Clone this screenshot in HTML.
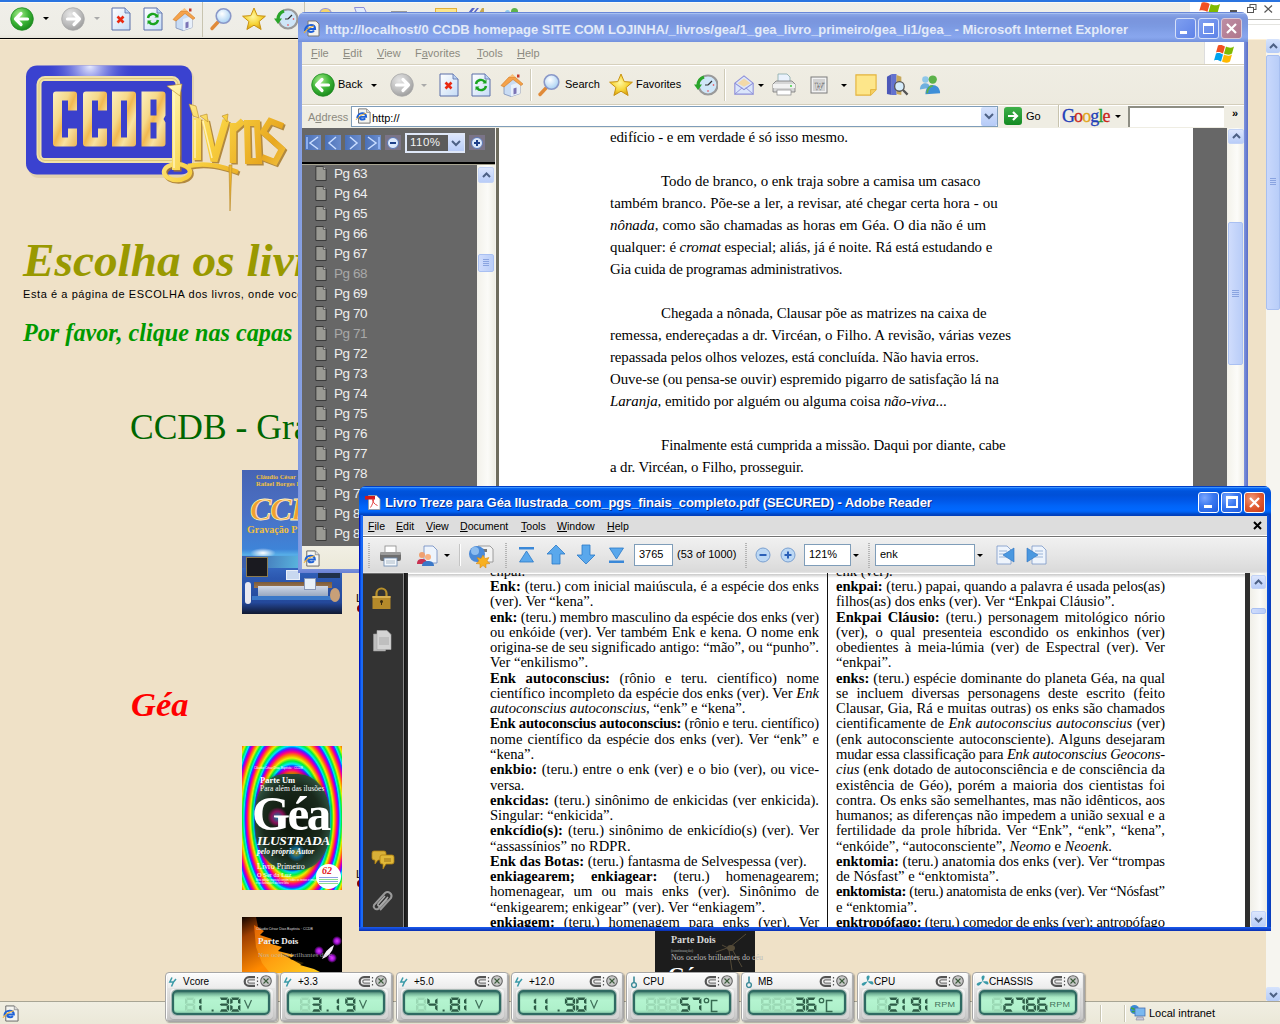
<!DOCTYPE html>
<html><head><meta charset="utf-8">
<style>
*{margin:0;padding:0;box-sizing:border-box}
html,body{width:1280px;height:1024px;overflow:hidden;background:#efe1c7;font-family:"Liberation Sans",sans-serif}
.a{position:absolute}
.ser{font-family:"Liberation Serif",serif}
.ui{font-family:"Liberation Sans",sans-serif;font-size:11px;color:#000}
svg{position:absolute;overflow:visible}
/*W*/.wg{position:absolute;top:972px;width:113px;height:50px;border-radius:4px;background:linear-gradient(#f6f6f6,#e2e2e2 35%,#d6d6d6 70%,#c4c4c4);border:1px solid #a6a6a6;box-shadow:inset 1px 1px #fff,inset -1px -1px #b0b0b0,1px 1px 1px rgba(0,0,0,.25)}
.wgh{position:absolute;left:2px;top:1px;width:107px;height:14px;background:linear-gradient(#fbfbfb,#ececec)}
.wgb{position:absolute;left:4px;top:16px;width:103px;height:30px;border-radius:4px;background:linear-gradient(#f8f8f8,#e0e0e0 40%,#d2d2d2);box-shadow:0 1px 1px #aaa}
.wgt{position:absolute;top:2.5px;font-size:10px;color:#000;white-space:nowrap}
.lcd{position:absolute;left:5.5px;top:17px;width:98px;height:25px;border-radius:5px;border:2.5px solid #2e6a62;background:linear-gradient(#4e8a78,#78b89c 10%,#a8e8c4 24%,#b4f4d0 40%,#aef0ca 85%,#8cd0ae);box-shadow:inset 0 0 1px #1f4e48,0 0 0 1px #a8b8b4}
/*/W*/





.pm{position:absolute;top:34px;font-size:10.6px;color:#000;white-space:nowrap}
.grip{position:absolute;top:57px;width:2px;height:25px;background:repeating-linear-gradient(#b4b4b4 0 1px,transparent 1px 2px)}
.pl{position:absolute;width:329px;font-size:14.6px;line-height:16px;white-space:nowrap;color:#000}
.pj{}

</style></head><body>

<svg width="0" height="0" style="position:absolute;left:0;top:0">
<defs>
 <radialGradient id="gGreen" cx="38%" cy="30%" r="75%"><stop offset="0" stop-color="#a8ec8c"/><stop offset="0.55" stop-color="#3cb436"/><stop offset="1" stop-color="#17861a"/></radialGradient>
 <radialGradient id="gGray" cx="38%" cy="30%" r="75%"><stop offset="0" stop-color="#e6e6e6"/><stop offset="0.6" stop-color="#bdbdbd"/><stop offset="1" stop-color="#9a9a9a"/></radialGradient>
 <linearGradient id="gDoc" x1="0" y1="0" x2="1" y2="1"><stop offset="0" stop-color="#ffffff"/><stop offset="1" stop-color="#c6dcf6"/></linearGradient>
 <radialGradient id="gStar" cx="45%" cy="40%" r="60%"><stop offset="0" stop-color="#fff7a0"/><stop offset="0.6" stop-color="#f7d538"/><stop offset="1" stop-color="#d9a212"/></radialGradient>
 <radialGradient id="gLens" cx="40%" cy="35%" r="65%"><stop offset="0" stop-color="#ffffff"/><stop offset="1" stop-color="#a9d2f4"/></radialGradient>
 <symbol id="iBack" viewBox="0 0 24 24"><circle cx="12" cy="12" r="11.3" fill="url(#gGreen)" stroke="#1f8a22" stroke-width="0.8"/><path d="M5.5 12h12M11 6.5L5.5 12l5.5 5.5" stroke="#fff" stroke-width="3.2" fill="none" stroke-linecap="round" stroke-linejoin="round"/></symbol>
 <symbol id="iFwd" viewBox="0 0 24 24"><circle cx="12" cy="12" r="11.3" fill="url(#gGray)" stroke="#a8a8a8" stroke-width="0.8"/><path d="M6.5 12h12M13 6.5l5.5 5.5L13 17.5" stroke="#fff" stroke-width="3.2" fill="none" stroke-linecap="round" stroke-linejoin="round"/></symbol>
 <symbol id="iStop" viewBox="0 0 20 24"><path d="M1 1h13l5 5v17H1z" fill="url(#gDoc)" stroke="#5a6ea8" stroke-width="1"/><path d="M14 1v5h5" fill="#bcd2f2" stroke="#5a6ea8" stroke-width="0.8"/><path d="M6.5 9.5l6 6M12.5 9.5l-6 6" stroke="#ea2a12" stroke-width="2.6"/></symbol>
 <symbol id="iRef" viewBox="0 0 20 24"><path d="M1 1h13l5 5v17H1z" fill="url(#gDoc)" stroke="#5a6ea8" stroke-width="1"/><path d="M14 1v5h5" fill="#bcd2f2" stroke="#5a6ea8" stroke-width="0.8"/><path d="M5 11a5 5 0 0 1 9-2M15 13a5 5 0 0 1-9 2" stroke="#1aa51f" stroke-width="2.4" fill="none"/><path d="M15.5 6.5v4h-4zM4.5 17.5v-4h4z" fill="#1aa51f"/></symbol>
 <symbol id="iHome" viewBox="0 0 24 24"><path d="M4 11v10l7 2.5 9-3V10L12 4z" fill="#c9dcf4" stroke="#7e8fb8" stroke-width="0.8"/><path d="M11 23.5V12l9-3v11.5z" fill="#e8f0fb"/><path d="M13.5 21.5v-6l3-1v6z" fill="#7b74b6"/><path d="M1 12.5L9 4h6l8 7-2 1.5-8-6-9 7.5z" fill="#f5a24a" stroke="#d07a25" stroke-width="0.6"/><path d="M9 4l3.5-3 3 3z" fill="#f8c07a"/><rect x="17" y="1.5" width="2.5" height="3" fill="#c43a2a"/></symbol>
 <symbol id="iSearch" viewBox="0 0 24 24"><path d="M3 21.5l6.5-7" stroke="#e08a38" stroke-width="3.4" stroke-linecap="round"/><circle cx="14.5" cy="9" r="7.3" fill="url(#gLens)" stroke="#8a98c8" stroke-width="1.6"/></symbol>
 <symbol id="iStar" viewBox="0 0 24 24"><path d="M12 1l3.2 7.6 8.2.6-6.3 5.3 2 8L12 18.2 4.9 22.5l2-8L.6 9.2l8.2-.6z" fill="url(#gStar)" stroke="#c89212" stroke-width="1"/></symbol>
 <symbol id="iHist" viewBox="0 0 24 24"><circle cx="14" cy="12" r="9.5" fill="#cfe6f8" stroke="#9a9a9a" stroke-width="2.2"/><path d="M14 12l4-4M14 12h-3" stroke="#333" stroke-width="1.2"/><circle cx="19.5" cy="12" r="0.8" fill="#e33"/><circle cx="14" cy="18" r="0.8" fill="#e33"/><path d="M10 4a9 9 0 0 0-6 8" stroke="#2aa52a" stroke-width="3.2" fill="none"/><path d="M0 11.5h8l-4 5.5z" fill="#2aa52a"/></symbol>
 <symbol id="iMail" viewBox="0 0 24 24"><path d="M2 10l10-8 10 8v12H2z" fill="#dbe6fb" stroke="#8e8fd8" stroke-width="1.2"/><path d="M5 10l7-5 7 5-7 4z" fill="#f3d9a8"/><path d="M2 10l10 7 10-7" fill="none" stroke="#8e8fd8" stroke-width="1.2"/><path d="M2 22l8-7M22 22l-8-7" stroke="#8e8fd8" stroke-width="1"/></symbol>
 <symbol id="iPrint" viewBox="0 0 24 24"><path d="M6 9V1h9l3 3v5z" fill="#eaf2fc" stroke="#8aa" stroke-width="0.8"/><path d="M1 11l3-3h16l3 3v8H1z" fill="#d6d6d6" stroke="#777" stroke-width="0.8"/><path d="M1 11h22v4H1z" fill="#f2f2f2"/><rect x="5" y="17" width="14" height="5" fill="#fff" stroke="#888" stroke-width="0.7"/><circle cx="19" cy="13" r="0.9" fill="#3c3"/></symbol>
 <symbol id="iWord" viewBox="0 0 18 18"><rect x="1" y="1" width="16" height="16" fill="#f2f2f2" stroke="#7c7c7c" stroke-width="1"/><rect x="3" y="3" width="12" height="12" fill="#d2d2d2"/><text x="9" y="13.5" font-family="Liberation Serif" font-style="italic" font-weight="bold" font-size="11" text-anchor="middle" fill="#fff" stroke="#666" stroke-width="0.4">W</text></symbol>
 <symbol id="iNote" viewBox="0 0 24 24"><path d="M1 1h22v16l-6 6H1z" fill="#fde68a" stroke="#e3b23a" stroke-width="1.2"/><path d="M17 23v-6h6" fill="#f6d064" stroke="#e3b23a" stroke-width="1"/></symbol>
 <symbol id="iBooks" viewBox="0 0 24 24"><path d="M1 4l5-3v22l-5-1z" fill="#4c58b8"/><path d="M6 1h5v22H6z" fill="#6272d0"/><path d="M11 2l5 2v19l-5-1z" fill="#c7a85a"/><circle cx="14" cy="14" r="5" fill="#d6ecfb" stroke="#555" stroke-width="1.4"/><path d="M17.5 17.5l5 5" stroke="#555" stroke-width="2.4"/></symbol>
 <symbol id="iMsn" viewBox="0 0 24 24"><circle cx="7" cy="6" r="3.5" fill="#8fc7ea"/><path d="M1 17c0-5 3-7 6-7s5 2 5 5z" fill="#6fb0df"/><circle cx="15" cy="6" r="4.5" fill="#5cb24a"/><path d="M7 22c0-7 4-10 8-10s8 3 8 9z" fill="#3e8fd8"/><path d="M9 21c0-5 3-8 6-8" fill="none" stroke="#5cb24a" stroke-width="2"/></symbol>
 <symbol id="iIE" viewBox="0 0 18 18"><path d="M4 1h9l4 4v12H4z" fill="#f5f5f0" stroke="#666" stroke-width="1"/><path d="M13 1v4h4" fill="#ddd" stroke="#666" stroke-width="0.6"/><path d="M2.5 11.5c0-3.5 2.5-5.5 5.5-5.5s4.5 2 4.5 4H5.5c0 2 1.5 3 3 3s2.5-.7 3-1.3" fill="none" stroke="#1f62d6" stroke-width="2.2"/><path d="M1 13.5c2.5-3.5 7-6.5 11.5-7.5" fill="none" stroke="#f0b33c" stroke-width="1.1"/></symbol>
 <symbol id="iPage" viewBox="0 0 12 16"><path d="M.5 .5h8l3 3v12H.5z" fill="#9a9a94" stroke="#333" stroke-width="1"/><path d="M8.5 .5v3h3" fill="#ddd" stroke="#333" stroke-width="0.8"/></symbol>
</defs>
</svg>

<!-- ============ BACKGROUND BROWSER ============ -->
<div class="a" style="left:0;top:0;width:1280px;height:2px;background:#2a74e0"></div>
<div class="a" style="left:0;top:2px;width:1280px;height:36px;background:linear-gradient(#fbfaf4 0 1px,#f0efe9 1px,#eeede6 90%,#e6e4da)"></div>
<div class="a" style="left:0;top:38px;width:1248px;height:1px;background:#000"></div>
<div class="a" style="left:0;top:39px;width:1266px;height:1px;background:#fdf0d8"></div>
<!-- top right white menu area -->
<div class="a" style="left:1190px;top:2px;width:90px;height:37px;background:#fff"></div>
<div class="a" style="left:1240px;top:19px;width:40px;height:1px;background:#b4b4b0"></div>
<div class="a" style="left:1240px;top:24px;width:40px;height:1px;background:#e4e4e0"></div>


<!-- background toolbar icons -->
<svg style="left:10px;top:7px" width="24" height="24"><use href="#iBack"/></svg>
<svg style="left:43px;top:17px" width="6" height="4"><path d="M0 0H6L3 3z" fill="#000"/></svg>
<svg style="left:61px;top:7px" width="24" height="24"><use href="#iFwd"/></svg>
<svg style="left:94px;top:17px" width="6" height="4"><path d="M0 0H6L3 3z" fill="#aaa"/></svg>
<svg style="left:111px;top:7px" width="20" height="24"><use href="#iStop"/></svg>
<svg style="left:143px;top:7px" width="20" height="24"><use href="#iRef"/></svg>
<svg style="left:172px;top:7px" width="24" height="24"><use href="#iHome"/></svg>
<div class="a" style="left:202px;top:2px;width:1px;height:35px;background:#c8c4b0"></div>
<svg style="left:209px;top:7px" width="24" height="24"><use href="#iSearch"/></svg>
<svg style="left:242px;top:7px" width="24" height="24"><use href="#iStar"/></svg>
<svg style="left:274px;top:7px" width="24" height="24"><use href="#iHist"/></svg>
<div class="a" style="left:304px;top:2px;width:1px;height:12px;background:#c8c4b0"></div>
<div class="a" style="left:319px;top:8px;width:13px;height:6px;background:#f6d56a;border-radius:6px 6px 0 0;border:1px solid #9a98d8;border-bottom:0"></div>
<svg style="left:354px;top:7px" width="13" height="6"><path d="M0.5 0.5H10L12.5 6H2.5Z" fill="#e4eefb" stroke="#8e8fd8"/></svg>
<div class="a" style="left:391px;top:11px;width:16px;height:2px;background:#9a9a9a"></div>
<div class="a" style="left:435px;top:8px;width:22px;height:6px;background:#fde68a;border:1px solid #e3b23a;border-bottom:0"></div>
<svg style="left:467px;top:8px" width="18" height="5"><path d="M1 5L5 0H8L4 5ZM6 5L10 0H12L8 5Z" fill="#5a68c8"/><path d="M12 5L15 0H17L17 5Z" fill="#c8a850"/></svg>
<div class="a" style="left:505px;top:10px;width:5px;height:4px;background:#8fc7ea;border-radius:3px 3px 0 0"></div>
<div class="a" style="left:511px;top:8px;width:7px;height:5px;background:#5cb24a;border-radius:4px 4px 0 0"></div>

<svg style="left:1197px;top:0px" width="30" height="24" viewBox="0 0 26 20">
    <path d="M4 2c3-1 5 0 7 1l-2 7c-2-1-4-2-7-1z" fill="#f25022"/>
    <path d="M12 3c2 1 5 2 8 0l-2 7c-3 2-6 1-8 0z" fill="#7fba00"/>
</svg>
<div class="a" style="left:1230px;top:10px;width:7px;height:2px;background:#555"></div>
<svg style="left:1247px;top:4px" width="10" height="10"><rect x="3" y="0.5" width="6" height="5" fill="none" stroke="#555"/><rect x="0.5" y="3.5" width="6" height="5" fill="#fff" stroke="#555"/></svg>
<svg style="left:1264px;top:5px" width="9" height="8"><path d="M0.5 0.5L8 7.5M8 0.5L0.5 7.5" stroke="#555" stroke-width="1.2"/></svg>

<!-- page scrollbar -->
<div class="a" style="left:1266px;top:39px;width:14px;height:962px;background:#f6f5f0"></div>
<div class="a" style="left:1266px;top:39px;width:14px;height:14px;background:linear-gradient(#d6e3fc,#b5cbf7);border-radius:2px"></div>
<div class="a" style="left:1266px;top:55px;width:14px;height:255px;background:linear-gradient(90deg,#c9d8fc,#b8cdf8);border:1px solid #a8bff0;border-radius:2px"></div>
<div class="a" style="left:1270px;top:178px;width:6px;height:7px;background:repeating-linear-gradient(#8aa4e0 0 1px,transparent 1px 2px)"></div>
<div class="a" style="left:1266px;top:987px;width:14px;height:14px;background:linear-gradient(#d6e3fc,#b5cbf7);border-radius:2px"></div>
<svg style="left:1269px;top:992px" width="9" height="6"><path d="M1 1L4.5 4.5L8 1" fill="none" stroke="#4d6185" stroke-width="2"/></svg>
<svg style="left:1269px;top:43px" width="9" height="6"><path d="M1 5L4.5 1.5L8 5" fill="none" stroke="#4d6185" stroke-width="2"/></svg>

<!-- status bar -->
<div class="a" style="left:0;top:1001px;width:1280px;height:1px;background:#a8a594"></div>
<div class="a" style="left:0;top:1002px;width:1280px;height:22px;background:linear-gradient(#f0eee2,#ebe8d8)"></div>
<div class="a" style="left:1100px;top:1005px;width:1px;height:17px;background:#c8c5b2;box-shadow:1px 0 #fff"></div>
<div class="a" style="left:1124px;top:1005px;width:1px;height:17px;background:#c8c5b2;box-shadow:1px 0 #fff"></div>
<div class="a ui" style="left:1149px;top:1007px;font-size:11px">Local intranet</div>
<svg style="left:1129px;top:1004px" width="18" height="18" viewBox="0 0 18 18"><circle cx="5.5" cy="5.5" r="4.5" fill="#3a8ad8"/><path d="M2 4c2 0 3 2 5 1M3 8c1-1 3 0 4-1" stroke="#3aa83a" stroke-width="1.6" fill="none"/><rect x="6" y="4" width="10" height="8" fill="#7ab8f0" stroke="#4a70b0" stroke-width="0.8"/><path d="M8 13h6l1 3H7z" fill="#c8c8d8" stroke="#8888a0" stroke-width="0.6"/></svg>
<svg style="left:2px;top:1005px" width="17" height="17"><use href="#iIE"/></svg>

<!-- ============ PAGE CONTENT ============ -->
<div class="a ser" style="left:23px;top:233px;font-size:47.3px;font-weight:bold;font-style:italic;color:#999900;white-space:nowrap">Escolha os livros</div>
<div class="a" style="left:23px;top:288px;font-size:11px;color:#000;white-space:nowrap;letter-spacing:0.58px">Esta é a página de ESCOLHA dos livros, onde você</div>
<div class="a ser" style="left:23px;top:319px;font-size:24.2px;font-weight:bold;font-style:italic;color:#009900;white-space:nowrap">Por favor, clique nas capas</div>
<div class="a ser" style="left:130px;top:406px;font-size:35.5px;color:#006600;white-space:nowrap">CCDB - Gravações</div>
<div class="a ser" style="left:131px;top:685px;font-size:34.5px;font-weight:bold;font-style:italic;color:#ff0000;white-space:nowrap">Géa</div>


<!-- logo -->
<svg style="left:20px;top:60px" width="280" height="160" viewBox="0 0 280 160">
 <defs>
  <radialGradient id="lgHi" cx="70" cy="6" r="45" gradientUnits="userSpaceOnUse"><stop offset="0" stop-color="#e8ecff"/><stop offset="1" stop-color="#3c44d2" stop-opacity="0"/></radialGradient>
  <linearGradient id="lgGold" x1="0" y1="0" x2="1" y2="1"><stop offset="0" stop-color="#fbeec0"/><stop offset="0.35" stop-color="#f6d98a"/><stop offset="0.5" stop-color="#f2b850"/><stop offset="0.7" stop-color="#f8e2a0"/><stop offset="1" stop-color="#eab456"/></linearGradient>
  <linearGradient id="lgGold2" x1="0" y1="0" x2="0.3" y2="1"><stop offset="0" stop-color="#fff4b0"/><stop offset="0.4" stop-color="#f5cc3a"/><stop offset="0.7" stop-color="#e8a820"/><stop offset="1" stop-color="#f8d860"/></linearGradient>
 </defs>
 <rect x="8" y="8" width="166" height="110" rx="11" fill="#d8c8a0" opacity="0.6"/>
 <rect x="6" y="5.5" width="166" height="109" rx="11" fill="#3a42d0"/>
 <rect x="6" y="5.5" width="166" height="109" rx="11" fill="url(#lgHi)"/>
 <rect x="19" y="18.5" width="139" height="82" rx="6" fill="none" stroke="#f0e2a8" stroke-width="5"/>
 <rect x="19" y="18.5" width="139" height="82" rx="6" fill="none" stroke="#c8a850" stroke-width="0.8" opacity="0.6"/>
 <rect x="22" y="21" width="133" height="77" rx="3" fill="#3a40cc"/>
 <g fill="url(#lgGold)" fill-rule="evenodd">
  <path transform="translate(33,31.5)" d="M3 0H21Q24 0 24 3V19H15V9H9V46H15V37H24V52Q24 55 21 55H3Q0 55 0 52V3Q0 0 3 0Z"/>
  <path transform="translate(63,31.5)" d="M3 0H21Q24 0 24 3V19H15V9H9V46H15V37H24V52Q24 55 21 55H3Q0 55 0 52V3Q0 0 3 0Z"/>
  <path transform="translate(92,31.5)" d="M0 0H21Q24 0 24 3V52Q24 55 21 55H0ZM9 9V46H15V9Z"/>
  <path transform="translate(121.5,31.5)" d="M0 0H21Q24 0 24 3V24L22 27.5L24 31V52Q24 55 21 55H0ZM9 8V24H15V8ZM9 31V47H15V31Z"/>
 </g>
</svg>
<svg style="left:0px;top:0px" width="300" height="220" viewBox="0 0 300 220">
 <defs>
  <linearGradient id="lvG" gradientUnits="userSpaceOnUse" x1="165" y1="90" x2="290" y2="170"><stop offset="0" stop-color="#fff6b8"/><stop offset="0.45" stop-color="#f8d040"/><stop offset="0.8" stop-color="#e8a820"/><stop offset="1" stop-color="#f4c848"/></linearGradient>
 </defs>
 <g fill="none" stroke-linejoin="miter" stroke-linecap="butt">
  <g stroke="#a87a28" transform="translate(1.6,1.6)" opacity="0.85">
   <path d="M176 90V170" stroke-width="8"/>
   <path d="M197 118V160" stroke-width="8"/>
   <path d="M205 120L214 161L226 120" stroke-width="7"/>
   <path d="M233 123V163M233 130L243 121" stroke-width="6.5"/>
   <path d="M247 123H257L259 161H248Z" stroke-width="6"/>
   <path d="M283 126L270 121L263 132L282 149L275 162L262 157" stroke-width="6"/>
   <ellipse cx="177" cy="172" rx="13" ry="8" stroke-width="4.5"/>
   <path d="M188 166C205 162 221 166 238 172" stroke-width="4.5"/>
  </g>
  <g stroke="url(#lvG)">
   <path d="M176 90V170" stroke-width="8"/>
   <path d="M197 118V160" stroke-width="8"/>
   <path d="M205 120L214 161L226 120" stroke-width="7"/>
   <path d="M233 123V163M233 130L243 121" stroke-width="6.5"/>
   <path d="M247 123H257L259 161H248Z" stroke-width="6"/>
   <path d="M283 126L270 121L263 132L282 149L275 162L262 157" stroke-width="6"/>
   <ellipse cx="177" cy="172" rx="13" ry="8" stroke-width="4.5"/>
   <path d="M188 166C205 162 221 166 238 172" stroke-width="4.5"/>
  </g>
  <path d="M174 92V168M195 120V158M203 121L212 158" stroke="#fff8d0" stroke-width="1.5" opacity="0.8"/>
 </g>
 <g fill="url(#lvG)" stroke="#b88a28" stroke-width="0.6">
  <path d="M167 86L182 84L180 96L172 90Z"/>
  <path d="M189 104L196 106L199 118L193 116Z"/>
  <path d="M200 116L207 114L208 122Z"/>
  <path d="M222 116L228 114L227 122Z"/>
  <path d="M232 165L230 211L229 165Z"/>
 </g>
</svg>

<!-- covers -->
<div class="a" style="left:242px;top:470px;width:100px;height:144px;overflow:hidden;background:linear-gradient(#4664b4,#4a70c4 30%,#3e84d8 55%,#58b0e8 59%,#3a70c8 63%,#2c58b0 75%,#24489a 92%,#101830)">
 <div class="a" style="left:14px;top:3px;font-family:'Liberation Serif';font-size:6.5px;font-weight:bold;color:#f0c040;line-height:7px;white-space:nowrap">Cláudio César R.<br>Rafael Borges R.</div>
 <div class="a" style="left:8px;top:21px;font-family:'Liberation Serif';font-size:32px;font-weight:bold;font-style:italic;color:#f0a030;-webkit-text-stroke:0.8px #fff0c0;white-space:nowrap;letter-spacing:-1px">CCD</div>
 <div class="a" style="left:5px;top:54px;font-family:'Liberation Serif';font-size:10px;font-weight:bold;color:#f0c040;white-space:nowrap">Gravação Pr</div>
 <div class="a" style="left:8px;top:78px;width:26px;height:10px;border-radius:50%;background:radial-gradient(#fff,rgba(255,255,255,0) 70%)"></div>
 <div class="a" style="left:0;top:86px;width:100px;height:12px;background:linear-gradient(100deg,#3a5aa8,#5ab8e0 60%,#2a58a8)"></div>
 <div class="a" style="left:4px;top:87px;width:22px;height:20px;background:#1a1a20;border:1px solid #8a7a50"></div>
 <div class="a" style="left:44px;top:100px;width:14px;height:10px;background:#c8d8f0;border:1px solid #e8eef8"></div>
 <div class="a" style="left:76px;top:100px;width:22px;height:8px;background:#20304a"></div>
 <div class="a" style="left:12px;top:112px;width:78px;height:6px;background:linear-gradient(#7a5a3a,#a07850)"></div>
 <div class="a" style="left:16px;top:116px;width:70px;height:10px;background:linear-gradient(#d0d8e8,#98a8c0)"></div>
 <div class="a" style="left:62px;top:108px;width:12px;height:12px;background:#e8f0f8;border:1px solid #8898b8"></div>
 <div class="a" style="left:10px;top:126px;width:82px;height:4px;background:#3a78c8"></div>
 <div class="a" style="left:3px;top:112px;width:6px;height:22px;border-radius:3px;background:#e8e8f0"></div>
 <div class="a" style="left:88px;top:118px;width:10px;height:14px;border-radius:50%;background:#c8a078"></div>
</div>
<div class="a" style="left:242px;top:746px;width:100px;height:144px;overflow:hidden;background:repeating-radial-gradient(ellipse 40px 75px at 50px 72px,#00e8ff 0,#00f040 1.6px,#e8f000 3.2px,#ff8000 4.8px,#ff0080 6.4px,#8000ff 8px,#0070ff 8.8px,#00e8ff 9.6px)">
 <div class="a" style="left:13px;top:28px;width:75px;height:96px;border-radius:38% 42% 40% 44%;background:radial-gradient(circle at 30% 45%,rgba(0,200,255,.6) 0,rgba(255,0,160,.5) 6px,transparent 10px),radial-gradient(circle at 55% 82%,rgba(255,200,0,.6) 0,rgba(0,160,255,.5) 5px,transparent 9px),radial-gradient(ellipse at 50% 50%,#0a1208,#1a2a1c 55%,#2a4a3a 72%,rgba(60,120,90,.6) 85%,transparent);box-shadow:0 0 3px 1px rgba(0,0,0,.3)"></div>
 <div class="a" style="left:12px;top:20px;font-family:'Liberation Sans';font-size:3px;color:#fff;white-space:nowrap">Cláudio César Dias Baptista · CCDB</div>
 <div class="a" style="left:18px;top:30px;font-family:'Liberation Serif';font-size:8.5px;font-weight:bold;color:#fff;white-space:nowrap;line-height:8px">Parte Um<br><span style="font-weight:normal;font-size:7.5px">Para além das ilusões</span></div>
 <div class="a" style="left:10px;top:40px;font-family:'Liberation Serif';font-size:49px;font-weight:bold;color:#fff;white-space:nowrap;letter-spacing:-2.5px;line-height:56px">Géa</div>
 <div class="a" style="left:15px;top:88px;font-family:'Liberation Serif';font-size:13.5px;font-weight:bold;font-style:italic;color:#fff;white-space:nowrap;letter-spacing:-0.3px;line-height:14px">ILUSTRADA</div>
 <div class="a" style="left:15px;top:102px;font-family:'Liberation Serif';font-size:7.5px;font-weight:bold;font-style:italic;color:#fff;white-space:nowrap;line-height:8px">pelo próprio Autor</div>
 <div class="a" style="left:15px;top:117px;font-family:'Liberation Serif';font-size:8px;color:#fff;white-space:nowrap;line-height:8px">Livro Primeiro<br><span style="font-size:6.5px">O Ser da Luz</span></div>
 <div class="a" style="left:14px;top:133px;font-family:'Liberation Sans';font-size:2.6px;color:#fff;white-space:nowrap;line-height:3px">Esta edição especial contém todos os textos e imagens<br>e as ilustrações do livro Géa</div>
 <div class="a" style="left:74px;top:118px;width:25px;height:25px;border-radius:50%;background:#fff"></div>
 <div class="a" style="left:80px;top:119px;font-family:'Liberation Serif';font-size:10px;font-weight:bold;font-style:italic;color:#e02020">62</div>
 <div class="a" style="left:77px;top:131px;width:19px;height:7px;opacity:.55;background:repeating-linear-gradient(#3050d0 0 1px,transparent 1px 2px,#30c030 2px 3px,transparent 3px 4px)"></div>
</div>
<svg style="left:242px;top:917px" width="100" height="56" viewBox="0 0 100 56">
 <defs>
  <linearGradient id="c3a" x1="0" y1="0" x2="0.3" y2="1"><stop offset="0" stop-color="#100400"/><stop offset="0.35" stop-color="#a04000"/><stop offset="1" stop-color="#ff8a00"/></linearGradient>
  <linearGradient id="c3b" x1="0" y1="0" x2="1" y2="1"><stop offset="0" stop-color="#e06000"/><stop offset="0.5" stop-color="#ffa010"/><stop offset="1" stop-color="#ffd020"/></linearGradient>
  <radialGradient id="c3p"><stop offset="0" stop-color="#e040ff"/><stop offset="0.5" stop-color="#a010d0"/><stop offset="1" stop-color="#a010d0" stop-opacity="0"/></radialGradient>
 </defs>
 <rect width="100" height="56" fill="#000"/>
 <path d="M0 0H14L22 40L30 56H0Z" fill="url(#c3a)"/>
 <path d="M12 8L22 14L18 18L30 22L26 26L40 30L36 34L52 38L48 42L62 46L58 48L72 52L80 56H28L20 46L14 30Z" fill="url(#c3b)"/>
 <path d="M38 36L60 44L72 46L60 48Z" fill="#000" opacity="0.8"/>
 <circle cx="95" cy="24" r="5" fill="url(#c3p)"/>
 <circle cx="77" cy="34" r="5" fill="url(#c3p)"/>
 <circle cx="90" cy="41" r="5" fill="url(#c3p)"/>
 <path d="M80 42Q84 32 92 28Q90 38 80 42Z" fill="#f4f0f8"/>
 <text x="16" y="27" font-family="Liberation Serif" font-weight="bold" font-size="9" fill="#eee">Parte Dois</text>
 <text x="16" y="40" font-family="Liberation Serif" font-size="7" fill="#bbb" opacity="0.8">Nos ocelos brilhantes do c</text>
 <text x="14" y="13" font-family="Liberation Sans" font-size="3.5" fill="#ddd">Cláudio César Dias Baptista · CCDB</text>
</svg>
<div class="a" style="left:655px;top:931px;width:100px;height:41px;background:#1c1c1c"></div>
<div class="a ser" style="left:671px;top:934px;font-size:10px;font-weight:bold;color:#d8d8d8;white-space:nowrap">Parte Dois</div>
<div class="a ser" style="left:671px;top:948px;font-size:4px;color:#aaa;white-space:nowrap">(continuação)</div>
<div class="a ser" style="left:671px;top:953px;font-size:8px;color:#bbb;white-space:nowrap">Nos ocelos brilhantes do céu</div>
<svg style="left:712px;top:933px;opacity:.6" width="36" height="38" viewBox="0 0 36 38"><g stroke="#7a6a4a" stroke-width="1" fill="none"><path d="M18 14L34 1M18 14L4 19M20 16L30 34M17 17L20 37M16 15L10 12"/></g><ellipse cx="19" cy="15" rx="4" ry="3" fill="#7a6a4a"/></svg>
<div class="a ser" style="left:668px;top:962px;font-size:22px;font-weight:bold;color:#fff;white-space:nowrap">Géa</div>

<div class="a" style="left:356px;top:592px;font-size:11px;color:#000">L</div>
<div class="a" style="left:357px;top:605px;width:6px;height:7px;border-radius:50%;background:#880000"></div>
<div class="a" style="left:356px;top:868px;font-size:11px;color:#000">L</div>
<div class="a" style="left:357px;top:880px;width:6px;height:7px;border-radius:50%;background:#880000"></div>

<!-- ============ IE WINDOW (inactive) ============ -->
<div class="a" id="ie" style="left:298px;top:12px;width:950px;height:561px;background:#7c97e0;border-radius:7px 7px 0 0;overflow:hidden">
  <div class="a" style="left:0;top:0;width:950px;height:30px;background:linear-gradient(#6a88d8 0 1px,#a8c0f0 1px 2px,#8aa6e8 2px,#7b96de 6px,#7a96de 10px,#7c9ae2 15px,#84a2ea 21px,#88a6ee 25px,#82a0e8 27px,#7290dc 30px);border-radius:7px 7px 0 0"></div>
  <div class="a" style="left:0;top:30px;width:4px;height:531px;background:linear-gradient(90deg,#7d97df,#8aa3e4)"></div>
  <div class="a" style="left:946px;top:30px;width:4px;height:531px;background:linear-gradient(90deg,#7d93dd,#5b6fc8)"></div>
  <div class="a" style="left:0;top:557px;width:950px;height:4px;background:linear-gradient(#7890dc,#6a80d4)"></div>
  <!-- title icon -->
  <svg style="left:5px;top:8px" width="18" height="18" viewBox="0 0 18 18">
    <path d="M5 1h8l3 3v12H5z" fill="#f4f3ee" stroke="#777" stroke-width="1"/>
    <path d="M2 11c0-4 3-6 6-6 3 0 4 2 4 4H5c0 2 1.5 3 3 3 1.5 0 2.5-.7 3-1.5" fill="none" stroke="#1d5fd8" stroke-width="2.2"/>
    <path d="M1 13c2-3 6-6 10-7" fill="none" stroke="#e7b03a" stroke-width="1.2"/>
  </svg>
  <div class="a" style="left:27px;top:10px;font-size:13px;font-weight:bold;color:#e3eaf8;white-space:nowrap;letter-spacing:-0.02px">http://localhost/0 CCDB homepage SITE COM LOJINHA/_livros/gea/1_gea_livro_primeiro/gea_li1/gea_ - Microsoft Internet Explorer</div>
  <!-- title buttons -->
  <div class="a" style="left:877px;top:6px;width:21px;height:21px;border:1px solid #d6e0f8;border-radius:3px;background:linear-gradient(135deg,#7f9ff0,#5e83e8)"><div class="a" style="left:4px;top:12px;width:7px;height:3px;background:#fff"></div></div>
  <div class="a" style="left:900px;top:6px;width:21px;height:21px;border:1px solid #d6e0f8;border-radius:3px;background:linear-gradient(135deg,#7f9ff0,#5e83e8)"><div class="a" style="left:4px;top:4px;width:11px;height:11px;border:1.5px solid #fff;border-top-width:3px"></div></div>
  <div class="a" style="left:923px;top:6px;width:21px;height:21px;border:1px solid #d8c8d8;border-radius:3px;background:linear-gradient(135deg,#bd8ea4,#b0768c)"><svg style="left:3px;top:3px" width="13" height="13"><path d="M2 2L11 11M11 2L2 11" stroke="#fff" stroke-width="2.2"/></svg></div>

  <!-- menu bar -->
  <div class="a" style="left:4px;top:30px;width:942px;height:22px;background:#efede2"></div>
  <div class="a" style="left:4px;top:52px;width:942px;height:1px;background:#d6d0bc"></div>
  <div class="a" style="left:906px;top:30px;width:40px;height:22px;background:#fff;border-left:1px solid #ddd"></div>
  <svg style="left:916px;top:31px" width="26" height="21" viewBox="0 0 26 20">
    <path d="M4 2c3-1 5 0 7 1l-2 7c-2-1-4-2-7-1z" fill="#f25022"/>
    <path d="M12 3c2 1 5 2 8 0l-2 7c-3 2-6 1-8 0z" fill="#7fba00"/>
    <path d="M2 10c3-1 5 0 7 1l-2 7c-2-1-4-2-7-1z" fill="#00a4ef"/>
    <path d="M10 11c2 1 5 2 8 0l-2 7c-3 2-6 1-8 0z" fill="#ffb900"/>
  </svg>
  <div class="a ui" style="left:13px;top:35px;color:#8c8a80"><u>F</u>ile</div>
  <div class="a ui" style="left:45px;top:35px;color:#8c8a80"><u>E</u>dit</div>
  <div class="a ui" style="left:79px;top:35px;color:#8c8a80"><u>V</u>iew</div>
  <div class="a ui" style="left:117px;top:35px;color:#8c8a80">F<u>a</u>vorites</div>
  <div class="a ui" style="left:179px;top:35px;color:#8c8a80"><u>T</u>ools</div>
  <div class="a ui" style="left:219px;top:35px;color:#8c8a80"><u>H</u>elp</div>

  <!-- toolbar -->
  <div class="a" style="left:4px;top:53px;width:942px;height:40px;background:linear-gradient(#fff 0 1px,#efede3 1px,#edeadf)"></div>
  <div class="a" style="left:4px;top:92px;width:942px;height:1px;background:#d4cebb"></div>
  <div class="a" style="left:4px;top:93px;width:942px;height:1px;background:#fff"></div>


  <!-- IE toolbar icons -->
  <svg style="left:13px;top:61px" width="24" height="24"><use href="#iBack"/></svg>
  <div class="a ui" style="left:40px;top:66px">Back</div>
  <svg style="left:73px;top:72px" width="6" height="4"><path d="M0 0H6L3 3z" fill="#000"/></svg>
  <svg style="left:92px;top:61px" width="24" height="24"><use href="#iFwd"/></svg>
  <svg style="left:123px;top:72px" width="6" height="4"><path d="M0 0H6L3 3z" fill="#aaa"/></svg>
  <svg style="left:141px;top:61px" width="20" height="24"><use href="#iStop"/></svg>
  <svg style="left:173px;top:61px" width="20" height="24"><use href="#iRef"/></svg>
  <svg style="left:202px;top:61px" width="24" height="24"><use href="#iHome"/></svg>
  <div class="a" style="left:232px;top:57px;width:1px;height:32px;background:#cfcbb8;box-shadow:1px 0 #fff"></div>
  <svg style="left:239px;top:61px" width="24" height="24"><use href="#iSearch"/></svg>
  <div class="a ui" style="left:267px;top:66px">Search</div>
  <svg style="left:311px;top:61px" width="24" height="24"><use href="#iStar"/></svg>
  <div class="a ui" style="left:338px;top:66px">Favorites</div>
  <svg style="left:396px;top:61px" width="24" height="24"><use href="#iHist"/></svg>
  <div class="a" style="left:426px;top:57px;width:1px;height:32px;background:#cfcbb8;box-shadow:1px 0 #fff"></div>
  <svg style="left:435px;top:61px" width="22" height="24"><use href="#iMail"/></svg>
  <svg style="left:460px;top:72px" width="6" height="4"><path d="M0 0H6L3 3z" fill="#000"/></svg>
  <svg style="left:474px;top:61px" width="24" height="24"><use href="#iPrint"/></svg>
  <svg style="left:512px;top:64px" width="18" height="18"><use href="#iWord"/></svg>
  <svg style="left:543px;top:72px" width="6" height="4"><path d="M0 0H6L3 3z" fill="#000"/></svg>
  <svg style="left:557px;top:62px" width="22" height="22"><use href="#iNote"/></svg>
  <svg style="left:588px;top:61px" width="23" height="23"><use href="#iBooks"/></svg>
  <svg style="left:620px;top:62px" width="24" height="22"><use href="#iMsn"/></svg>

  <!-- address bar -->
  <div class="a" style="left:4px;top:94px;width:942px;height:22px;background:#efede3"></div>
  <div class="a ui" style="left:10px;top:99px;color:#8c8a80">A<u>d</u>dress</div>
  <div class="a" style="left:53px;top:94px;width:647px;height:21px;background:#fff;border:1px solid #7f9db9"></div>
  <svg style="left:57px;top:95px" width="16" height="18"><use href="#iIE"/></svg>
  <div class="a ui" style="left:74px;top:100px">http://</div>
  <div class="a" style="left:683px;top:95px;width:16px;height:19px;background:linear-gradient(#d5e2fc,#b6cbf7);border-radius:2px"></div>
  <svg style="left:686px;top:101px" width="10" height="7"><path d="M1 1L5 5L9 1" fill="none" stroke="#4d6185" stroke-width="2"/></svg>
  <div class="a" style="left:706px;top:95px;width:18px;height:18px;background:linear-gradient(#3fb04a,#138a22);border-radius:3px"></div>
  <svg style="left:709px;top:98px" width="12" height="12"><path d="M1 6H10M6 2L10 6L6 10" fill="none" stroke="#fff" stroke-width="2.2"/></svg>
  <div class="a ui" style="left:728px;top:98px">Go</div>
  <div class="a" style="left:760px;top:93px;width:1px;height:22px;background:#c8c3ae;box-shadow:1px 0 #fff"></div>
  <div class="a ser" style="left:764px;top:94px;font-size:18px;letter-spacing:-0.9px;white-space:nowrap;-webkit-text-stroke:0.3px currentColor"><span style="color:#1f3fb8">G</span><span style="color:#c9251a">o</span><span style="color:#e2a418">o</span><span style="color:#1f3fb8">g</span><span style="color:#2a9a2f">l</span><span style="color:#c9251a">e</span></div>
  <svg style="left:817px;top:103px" width="6" height="4"><path d="M0 0H6L3 3z" fill="#000"/></svg>
  <div class="a" style="left:830px;top:94px;width:96px;height:21px;background:#fff;border-top:2px solid #8e8e84;border-left:2px solid #8e8e84"></div>
  <div class="a ui" style="left:934px;top:95px;font-weight:bold;font-size:11px">»</div>

  <!-- content -->
  <div class="a" style="left:4px;top:116px;width:942px;height:419px;background:#fff"></div>
  <!-- nav pane -->
  <div class="a" style="left:4px;top:116px;width:196px;height:419px;background:#676767"></div>
  <div class="a" style="left:4px;top:150px;width:193px;height:2px;background:#000"></div>
  <div class="a" style="left:4px;top:152px;width:193px;height:1px;background:#a8a592"></div>
  <div class="a" style="left:179px;top:153px;width:18px;height:382px;background:linear-gradient(90deg,#f2f1ea,#fbfbf8 60%,#eeede5)"></div>
  <div class="a" style="left:180px;top:155px;width:16px;height:16px;background:linear-gradient(#dce6fd,#b9cdf8);border:1px solid #c3d3f6;border-radius:2px"></div>
  <svg style="left:184px;top:160px" width="9" height="6"><path d="M1 5L4.5 1.5L8 5" fill="none" stroke="#4d6185" stroke-width="2"/></svg>
  <div class="a" style="left:180px;top:242px;width:16px;height:18px;background:linear-gradient(90deg,#cfdcfc,#b9cdf8);border:1px solid #a9c0f2;border-radius:2px"></div>
  <div class="a" style="left:185px;top:247px;width:6px;height:7px;background:repeating-linear-gradient(#8aa4e0 0 1px,transparent 1px 2px)"></div>
  <div class="a" style="left:197px;top:116px;width:1px;height:419px;background:#f4f3ee"></div>
  <div class="a" style="left:198px;top:116px;width:3px;height:419px;background:#6e6c5e"></div>

  <!-- nav toolbar -->
  <div class="a" style="left:7px;top:123px;width:16px;height:15px;background:linear-gradient(90deg,#4a70b8,#6a8ccc)"><svg style="left:0;top:0" width="16" height="16"><path d="M2 2v12" stroke="#9ec0ff" stroke-width="1.5"/><path d="M13 2L5 8l8 6" fill="none" stroke="#c8dcff" stroke-width="1.5"/></svg></div>
  <div class="a" style="left:27px;top:123px;width:16px;height:15px;background:linear-gradient(90deg,#4a70b8,#6a8ccc)"><svg style="left:0;top:0" width="16" height="16"><path d="M11 2L4 8l7 6" fill="none" stroke="#c8dcff" stroke-width="1.5"/></svg></div>
  <div class="a" style="left:47px;top:123px;width:16px;height:15px;background:linear-gradient(90deg,#4a70b8,#6a8ccc)"><svg style="left:0;top:0" width="16" height="16"><path d="M5 2l7 6-7 6" fill="none" stroke="#c8dcff" stroke-width="1.5"/></svg></div>
  <div class="a" style="left:67px;top:123px;width:16px;height:15px;background:linear-gradient(90deg,#4a70b8,#6a8ccc)"><svg style="left:0;top:0" width="16" height="16"><path d="M3 2l8 6-8 6" fill="none" stroke="#c8dcff" stroke-width="1.5"/><path d="M14 2v12" stroke="#9ec0ff" stroke-width="1.5"/></svg></div>
  <div class="a" style="left:87px;top:123px;width:16px;height:15px;background:#7a7488"><svg style="left:0;top:0" width="16" height="16"><circle cx="8" cy="8" r="5.5" fill="#dce8fb" stroke="#5a78b8"/><path d="M5 8h6" stroke="#1d3f8a" stroke-width="2"/></svg></div>
  <div class="a" style="left:107px;top:121px;width:60px;height:20px;border:2px solid #dfe8f8;background:#5b5b5b"></div>
  <div class="a" style="left:112px;top:124px;font-size:11.5px;color:#f2f2f2;letter-spacing:0.5px">110%</div>
  <div class="a" style="left:150px;top:123px;width:16px;height:16px;background:linear-gradient(#dce6fd,#b9cdf8)"><svg style="left:3px;top:5px" width="10" height="7"><path d="M1 1L5 5L9 1" fill="none" stroke="#4d6185" stroke-width="2"/></svg></div>
  <div class="a" style="left:171px;top:123px;width:16px;height:15px;background:#7a7488"><svg style="left:0;top:0" width="16" height="16"><circle cx="8" cy="8" r="5.5" fill="#dce8fb" stroke="#5a78b8"/><path d="M5 8h6M8 5v6" stroke="#1d3f8a" stroke-width="2"/></svg></div>
  <!-- list -->
  <div class="a" style="left:4px;top:153px;width:175px;height:382px;overflow:hidden">
    <div class="a" style="left:-4px;top:-153px;width:200px;height:600px">
<svg style="left:17px;top:154px" width="12" height="15"><use href="#iPage"/></svg><div class="a" style="left:36px;top:154px;font-size:13.5px;color:#eeeeee;white-space:nowrap;letter-spacing:-0.45px">Pg 63</div>
<svg style="left:17px;top:174px" width="12" height="15"><use href="#iPage"/></svg><div class="a" style="left:36px;top:174px;font-size:13.5px;color:#eeeeee;white-space:nowrap;letter-spacing:-0.45px">Pg 64</div>
<svg style="left:17px;top:194px" width="12" height="15"><use href="#iPage"/></svg><div class="a" style="left:36px;top:194px;font-size:13.5px;color:#eeeeee;white-space:nowrap;letter-spacing:-0.45px">Pg 65</div>
<svg style="left:17px;top:214px" width="12" height="15"><use href="#iPage"/></svg><div class="a" style="left:36px;top:214px;font-size:13.5px;color:#eeeeee;white-space:nowrap;letter-spacing:-0.45px">Pg 66</div>
<svg style="left:17px;top:234px" width="12" height="15"><use href="#iPage"/></svg><div class="a" style="left:36px;top:234px;font-size:13.5px;color:#eeeeee;white-space:nowrap;letter-spacing:-0.45px">Pg 67</div>
<svg style="left:17px;top:254px" width="12" height="15"><use href="#iPage"/></svg><div class="a" style="left:36px;top:254px;font-size:13.5px;color:#a9a9a9;white-space:nowrap;letter-spacing:-0.45px">Pg 68</div>
<svg style="left:17px;top:274px" width="12" height="15"><use href="#iPage"/></svg><div class="a" style="left:36px;top:274px;font-size:13.5px;color:#eeeeee;white-space:nowrap;letter-spacing:-0.45px">Pg 69</div>
<svg style="left:17px;top:294px" width="12" height="15"><use href="#iPage"/></svg><div class="a" style="left:36px;top:294px;font-size:13.5px;color:#eeeeee;white-space:nowrap;letter-spacing:-0.45px">Pg 70</div>
<svg style="left:17px;top:314px" width="12" height="15"><use href="#iPage"/></svg><div class="a" style="left:36px;top:314px;font-size:13.5px;color:#a9a9a9;white-space:nowrap;letter-spacing:-0.45px">Pg 71</div>
<svg style="left:17px;top:334px" width="12" height="15"><use href="#iPage"/></svg><div class="a" style="left:36px;top:334px;font-size:13.5px;color:#eeeeee;white-space:nowrap;letter-spacing:-0.45px">Pg 72</div>
<svg style="left:17px;top:354px" width="12" height="15"><use href="#iPage"/></svg><div class="a" style="left:36px;top:354px;font-size:13.5px;color:#eeeeee;white-space:nowrap;letter-spacing:-0.45px">Pg 73</div>
<svg style="left:17px;top:374px" width="12" height="15"><use href="#iPage"/></svg><div class="a" style="left:36px;top:374px;font-size:13.5px;color:#eeeeee;white-space:nowrap;letter-spacing:-0.45px">Pg 74</div>
<svg style="left:17px;top:394px" width="12" height="15"><use href="#iPage"/></svg><div class="a" style="left:36px;top:394px;font-size:13.5px;color:#eeeeee;white-space:nowrap;letter-spacing:-0.45px">Pg 75</div>
<svg style="left:17px;top:414px" width="12" height="15"><use href="#iPage"/></svg><div class="a" style="left:36px;top:414px;font-size:13.5px;color:#eeeeee;white-space:nowrap;letter-spacing:-0.45px">Pg 76</div>
<svg style="left:17px;top:434px" width="12" height="15"><use href="#iPage"/></svg><div class="a" style="left:36px;top:434px;font-size:13.5px;color:#eeeeee;white-space:nowrap;letter-spacing:-0.45px">Pg 77</div>
<svg style="left:17px;top:454px" width="12" height="15"><use href="#iPage"/></svg><div class="a" style="left:36px;top:454px;font-size:13.5px;color:#eeeeee;white-space:nowrap;letter-spacing:-0.45px">Pg 78</div>
<svg style="left:17px;top:474px" width="12" height="15"><use href="#iPage"/></svg><div class="a" style="left:36px;top:474px;font-size:13.5px;color:#eeeeee;white-space:nowrap;letter-spacing:-0.45px">Pg 79</div>
<svg style="left:17px;top:494px" width="12" height="15"><use href="#iPage"/></svg><div class="a" style="left:36px;top:494px;font-size:13.5px;color:#eeeeee;white-space:nowrap;letter-spacing:-0.45px">Pg 80</div>
<svg style="left:17px;top:514px" width="12" height="15"><use href="#iPage"/></svg><div class="a" style="left:36px;top:514px;font-size:13.5px;color:#eeeeee;white-space:nowrap;letter-spacing:-0.45px">Pg 81</div>
    </div>
  </div>
  <!-- page text -->
  <div class="a ser" style="left:312px;top:116px;width:583px;height:419px;overflow:hidden;font-size:14.9px;color:#000;white-space:nowrap">
    <div class="a" style="left:0;top:1px;letter-spacing:-0.100px">edifício - e em verdade é só isso mesmo.</div>
    <div class="a" style="left:51px;top:45px;letter-spacing:-0.014px">Todo de branco, o enk traja sobre a camisa um casaco</div>
    <div class="a" style="left:0;top:67px;word-spacing:0.26px">também branco. Põe-se a ler, a revisar, até chegar certa hora - ou</div>
    <div class="a" style="left:0;top:89px;word-spacing:0.39px"><i>nônada,</i> como são chamadas as horas em Géa. O dia não é um</div>
    <div class="a" style="left:0;top:111px;letter-spacing:-0.058px">qualquer: é <i>cromat</i> especial; aliás, já é noite. Rá está estudando e</div>
    <div class="a" style="left:0;top:133px;letter-spacing:-0.224px">Gia cuida de programas administrativos.</div>
    <div class="a" style="left:51px;top:177px;letter-spacing:-0.052px">Chegada a nônada, Clausar põe as matrizes na caixa de</div>
    <div class="a" style="left:0;top:199px;word-spacing:0.07px">remessa, endereçadas a dr. Vircéan, o Filho. A revisão, várias vezes</div>
    <div class="a" style="left:0;top:221px;letter-spacing:-0.097px">repassada pelos olhos velozes, está concluída. Não havia erros.</div>
    <div class="a" style="left:0;top:243px;letter-spacing:-0.069px">Ouve-se (ou pensa-se ouvir) espremido pigarro de satisfação lá na</div>
    <div class="a" style="left:0;top:265px;letter-spacing:-0.054px"><i>Laranja,</i> emitido por alguém ou alguma coisa <i>não-viva</i>...</div>
    <div class="a" style="left:51px;top:309px;letter-spacing:-0.121px">Finalmente está cumprida a missão. Daqui por diante, cabe</div>
    <div class="a" style="left:0;top:331px;letter-spacing:-0.115px">a dr. Vircéan, o Filho, prosseguir.</div>
  </div>

  <!-- gray right area + scrollbar -->
  <div class="a" style="left:895px;top:116px;width:34px;height:419px;background:#676767"></div>
  <div class="a" style="left:929px;top:116px;width:17px;height:419px;background:linear-gradient(90deg,#f3f2ea,#fcfcf9 60%,#eeede4)"></div>
  <div class="a" style="left:930px;top:117px;width:16px;height:15px;background:linear-gradient(#dce6fd,#b9cdf8);border:1px solid #c3d3f6;border-radius:2px"></div>
  <svg style="left:934px;top:121px" width="9" height="6"><path d="M1 5L4.5 1.5L8 5" fill="none" stroke="#4d6185" stroke-width="2"/></svg>
  <div class="a" style="left:930px;top:210px;width:15px;height:143px;background:linear-gradient(90deg,#cfdcfc,#b9cdf8);border:1px solid #a9c0f2;border-radius:2px"></div>
  <div class="a" style="left:934px;top:278px;width:7px;height:7px;background:repeating-linear-gradient(#8aa4e0 0 1px,transparent 1px 2px)"></div>

  <!-- status bar -->
  <div class="a" style="left:4px;top:534px;width:942px;height:23px;background:linear-gradient(#f1efe4,#ebe8d8)"></div>
  <svg style="left:5px;top:538px" width="17" height="17"><use href="#iIE"/></svg>
</div>

<!-- ============ ADOBE READER WINDOW (active) ============ -->
<div class="a" id="pdf" style="left:359px;top:486px;width:912px;height:445px;border-radius:7px 7px 0 0;overflow:hidden;background:#0a4fd8">
  <div class="a" style="left:0;top:0;width:912px;height:30px;background:linear-gradient(#0040c8 0 1px,#3d95ff 1px 2px,#0a6af8 2px,#0054dc 5px,#0050d8 9px,#0056e6 14px,#0064f8 20px,#0068ff 24px,#0060f0 26px,#0048c8 28px,#003cb8 30px);border-radius:7px 7px 0 0"></div>
  <div class="a" style="left:0;top:29px;width:4px;height:416px;background:linear-gradient(90deg,#0018c0 0 1px,#0a4ce8 1px 2px,#1a6af4 2px)"></div>
  <div class="a" style="left:908px;top:29px;width:4px;height:416px;background:linear-gradient(90deg,#0a52e0,#0a3ab8)"></div>
  <div class="a" style="left:0;top:441px;width:912px;height:4px;background:linear-gradient(#1a5cf0,#0a2fb0)"></div>
  <svg style="left:6px;top:9px" width="16" height="15" viewBox="0 0 16 15">
    <path d="M3.5 .5h8l3.5 3.5v10.5H3.5z" fill="#fff" stroke="#999" stroke-width="0.8"/>
    <rect x="0" y="1" width="10" height="3.5" fill="#d21818"/>
    <path d="M5.5 12.5c2-3 3-6 3-8s-1-1-1 0c0 2 2 5 5 6" fill="none" stroke="#e03030" stroke-width="0.9"/>
  </svg>
  <div class="a" style="left:26px;top:9px;font-size:13px;font-weight:bold;color:#fff;white-space:nowrap;text-shadow:1px 1px #0a2a8a;letter-spacing:-0.1px">Livro Treze para Géa Ilustrada_com_pgs_finais_completo.pdf (SECURED) - Adobe Reader</div>
  <div class="a" style="left:839px;top:6px;width:21px;height:21px;border:1px solid #fff;border-radius:3px;background:radial-gradient(circle at 30% 25%,#7aa6ff,#3a78f0 45%,#1b5ae0)"><div class="a" style="left:5px;top:12px;width:8px;height:3px;background:#fff"></div></div>
  <div class="a" style="left:862px;top:6px;width:21px;height:21px;border:1px solid #fff;border-radius:3px;background:radial-gradient(circle at 30% 25%,#7aa6ff,#3a78f0 45%,#1b5ae0)"><div class="a" style="left:4px;top:3px;width:12px;height:12px;border:2px solid #fff;border-top-width:3px"></div></div>
  <div class="a" style="left:885px;top:6px;width:21px;height:21px;border:1px solid #fff;border-radius:3px;background:radial-gradient(circle at 35% 30%,#f09a7a,#e05a30 50%,#c83a18)"><svg style="left:3px;top:3px" width="13" height="13"><path d="M2 2L11 11M11 2L2 11" stroke="#fff" stroke-width="2.2"/></svg></div>

  <!-- menu -->
  <div class="a" style="left:4px;top:30px;width:904px;height:20px;background:#dddddd"></div>
  <div class="a" style="left:4px;top:49px;width:904px;height:1px;background:#fff"></div>
  <div class="a" style="left:4px;top:50px;width:904px;height:1px;background:#727272"></div>
  <div class="pm" style="left:9px"><u>F</u>ile</div>
  <div class="pm" style="left:37px"><u>E</u>dit</div>
  <div class="pm" style="left:67px"><u>V</u>iew</div>
  <div class="pm" style="left:101px"><u>D</u>ocument</div>
  <div class="pm" style="left:162px"><u>T</u>ools</div>
  <div class="pm" style="left:198px"><u>W</u>indow</div>
  <div class="pm" style="left:248px"><u>H</u>elp</div>
  <svg style="left:894px;top:35px" width="9" height="9"><path d="M1 1L8 8M8 1L1 8" stroke="#000" stroke-width="2"/></svg>

  <!-- toolbar -->
  <div class="a" style="left:4px;top:51px;width:904px;height:36px;background:linear-gradient(#fff 0 1px,#f0f0f0 1px,#e6e6e6 50%,#dadada 95%,#e8e8e8)"></div>
  <div class="a" style="left:4px;top:87px;width:904px;height:1px;background:#707070"></div>
  <div class="grip" style="left:9px"></div>
  <div class="grip" style="left:146px"></div>
  <div class="grip" style="left:386px"></div>
  <div class="grip" style="left:509px"></div>
  <div class="a" style="left:100px;top:58px;width:1px;height:22px;background:#c4c4c4;box-shadow:1px 0 #fff"></div>
  <svg style="left:20px;top:59px" width="23" height="22" viewBox="0 0 23 22"><rect x="6" y="1" width="11" height="7" fill="#fff" stroke="#888" stroke-width="0.8"/><rect x="1" y="7" width="21" height="9" rx="2" fill="#6e6e6e"/><rect x="1" y="7" width="21" height="3" rx="1.5" fill="#9a9a9a"/><rect x="5" y="13" width="13" height="8" fill="#f4f8fc" stroke="#6a88b0" stroke-width="0.8"/><path d="M7 16h9M7 18h9" stroke="#9ab" stroke-width="0.8"/></svg>
  <svg style="left:57px;top:59px" width="22" height="22" viewBox="0 0 22 22"><path d="M8 1h9l4 4v13H8z" fill="#eef4fc" stroke="#6a88c0" stroke-width="0.8"/><circle cx="6" cy="10" r="3" fill="#f0a070"/><path d="M1 19c0-4 2-5 5-5s5 1 5 5z" fill="#c83050"/><circle cx="12" cy="12" r="3" fill="#f8b080"/><path d="M6 21c0-4 3-5 6-5s6 1 6 5z" fill="#3a78c8"/></svg>
  <svg style="left:85px;top:68px" width="6" height="4"><path d="M0 0H6L3 3z" fill="#000"/></svg>
  <svg style="left:109px;top:57px" width="26" height="25" viewBox="0 0 26 25"><path d="M10 3h12l3 3v13H10z" fill="#f2f2f2" stroke="#888" stroke-width="0.8"/><rect x="12" y="6" width="7" height="3" fill="#777"/><circle cx="9" cy="11" r="8" fill="#4a8ad8"/><circle cx="7" cy="8" r="4" fill="#9cc8f4" opacity="0.8"/><path d="M15 12l2 3.5 4-1-2 3.5 3 2.5-4 .5v4l-3-2.5-3 2.5v-4l-4-.5 3-2.5-2-3.5 4 1z" fill="#f8b020" stroke="#d08010" stroke-width="0.5"/></svg>
  <svg style="left:159px;top:60px" width="17" height="18" viewBox="0 0 17 18"><rect x="1" y="1" width="15" height="2.5" fill="#3a88d8"/><path d="M8.5 5L15.5 16H1.5z" fill="#5aa8ec" stroke="#2a78c8" stroke-width="0.8"/></svg>
  <svg style="left:187px;top:58px" width="20" height="21" viewBox="0 0 20 21"><path d="M10 1L19 10h-5v10H6V10H1z" fill="#5aa8ec" stroke="#2a78c8" stroke-width="0.8"/></svg>
  <svg style="left:217px;top:58px" width="20" height="21" viewBox="0 0 20 21"><path d="M10 20L19 11h-5V1H6v10H1z" fill="#5aa8ec" stroke="#2a78c8" stroke-width="0.8"/></svg>
  <svg style="left:249px;top:60px" width="17" height="18" viewBox="0 0 17 18"><rect x="1" y="14.5" width="15" height="2.5" fill="#3a88d8"/><path d="M8.5 13L15.5 2H1.5z" fill="#5aa8ec" stroke="#2a78c8" stroke-width="0.8"/></svg>
  <div class="a" style="left:275px;top:58px;width:39px;height:22px;background:#fff;border:1px solid #7f9db9"></div>
  <div class="a ui" style="left:280px;top:62px;font-size:11px">3765</div>
  <div class="a ui" style="left:318px;top:62px;font-size:11px">(53 of 1000)</div>
  <svg style="left:396px;top:61px" width="16" height="16" viewBox="0 0 16 16"><circle cx="8" cy="8" r="7" fill="#bcd8f4" stroke="#7aa0d0"/><path d="M4.5 8h7" stroke="#2a60b8" stroke-width="2"/></svg>
  <svg style="left:421px;top:61px" width="16" height="16" viewBox="0 0 16 16"><circle cx="8" cy="8" r="7" fill="#bcd8f4" stroke="#7aa0d0"/><path d="M4.5 8h7M8 4.5v7" stroke="#2a60b8" stroke-width="2"/></svg>
  <div class="a" style="left:445px;top:58px;width:47px;height:22px;background:#fff;border:1px solid #7f9db9"></div>
  <div class="a ui" style="left:450px;top:62px;font-size:11px">121%</div>
  <svg style="left:494px;top:68px" width="6" height="4"><path d="M0 0H6L3 3z" fill="#000"/></svg>
  <div class="a" style="left:516px;top:58px;width:100px;height:22px;background:#fff;border:1px solid #7f9db9"></div>
  <div class="a ui" style="left:521px;top:62px;font-size:11px">enk</div>
  <svg style="left:618px;top:68px" width="6" height="4"><path d="M0 0H6L3 3z" fill="#000"/></svg>
  <svg style="left:635px;top:59px" width="21" height="20" viewBox="0 0 21 20"><path d="M3 1h10l4 4v14H3z" fill="#eef4fc" stroke="#7a98c8" stroke-width="0.8"/><path d="M5 6h8M5 9h8M5 12h8" stroke="#9ab4d8"/><path d="M20 3L9 10l11 7z" fill="#4a98e0" stroke="#2a70c0" stroke-width="0.6"/></svg>
  <svg style="left:667px;top:59px" width="21" height="20" viewBox="0 0 21 20"><path d="M6 1h10l4 4v14H6z" fill="#eef4fc" stroke="#7a98c8" stroke-width="0.8"/><path d="M9 6h8M9 9h8M9 12h8" stroke="#9ab4d8"/><path d="M1 3l11 7-11 7z" fill="#4a98e0" stroke="#2a70c0" stroke-width="0.6"/></svg>

  <!-- document area -->
  <div class="a" style="left:4px;top:88px;width:41px;height:353px;background:#333333"></div>
  <div class="a" style="left:44px;top:87px;width:1px;height:354px;background:#8a8a8a"></div>
  <div class="a" style="left:45px;top:87px;width:4px;height:354px;background:linear-gradient(90deg,#111,#222 50%,#2e2e2e)"></div>
  <div class="a" style="left:49px;top:87px;width:837px;height:354px;background:#fff"></div>
  <div class="a" style="left:49px;top:88px;width:837px;height:4px;background:linear-gradient(#c8c8c8,#fff)"></div>
  <div class="a" style="left:886px;top:87px;width:5px;height:354px;background:#2e2e2e"></div>
  <div class="a" style="left:891px;top:87px;width:17px;height:354px;background:linear-gradient(90deg,#f0efe8,#fbfbf8 60%,#eeede5)"></div>
  <div class="a" style="left:892px;top:89px;width:15px;height:14px;background:linear-gradient(#dce6fd,#b9cdf8);border:1px solid #c3d3f6;border-radius:2px"></div>
  <svg style="left:895px;top:93px" width="9" height="6"><path d="M1 5L4.5 1.5L8 5" fill="none" stroke="#4d6185" stroke-width="2"/></svg>
  <div class="a" style="left:892px;top:122px;width:15px;height:6px;background:linear-gradient(90deg,#cfdcfc,#b9cdf8);border:1px solid #a9c0f2;border-radius:2px"></div>
  <div class="a" style="left:892px;top:425px;width:15px;height:16px;background:linear-gradient(#dce6fd,#b9cdf8);border:1px solid #c3d3f6;border-radius:2px"></div>
  <svg style="left:895px;top:431px" width="9" height="6"><path d="M1 1L4.5 4.5L8 1" fill="none" stroke="#4d6185" stroke-width="2"/></svg>
  <div class="a" style="left:468px;top:87px;width:1px;height:354px;background:#111"></div>
  <!-- sidebar icons -->
  <svg style="left:13px;top:101px" width="19" height="23" viewBox="0 0 19 23"><path d="M4.5 10V6.5a5 5 0 0 1 10 0V10" fill="none" stroke="#b8902a" stroke-width="2.2"/><rect x="0.5" y="9" width="18" height="13" fill="#b58a2a"/><rect x="0.5" y="9" width="18" height="2" fill="#d8b050"/><circle cx="9.5" cy="14.5" r="1.5" fill="#3a2a10"/><rect x="9" y="15" width="1" height="3" fill="#3a2a10"/></svg>
  <svg style="left:14px;top:144px" width="19" height="22" viewBox="0 0 19 22"><path d="M0.5 4h12v17H.5z" fill="#bdbdbd" stroke="#999" stroke-width="0.6"/><path d="M4 .5h10l4 4v15H4z" fill="#d4d4d4" stroke="#aaa" stroke-width="0.6"/><path d="M6 8h10M6 10h10M6 12h10M6 14h10" stroke="#999" stroke-width="0.7"/></svg>
  <svg style="left:12px;top:365px" width="24" height="19" viewBox="0 0 24 19"><path d="M1 2a2 2 0 0 1 2-2h10a2 2 0 0 1 2 2v5a2 2 0 0 1-2 2H7l-3 4V9H3a2 2 0 0 1-2-2z" fill="#d8b038" stroke="#b08010" stroke-width="0.8"/><path d="M9 6a2 2 0 0 1 2-2h10a2 2 0 0 1 2 2v5a2 2 0 0 1-2 2h-6l-3 5v-5h-1a2 2 0 0 1-2-2z" fill="#e0b838" stroke="#b08010" stroke-width="0.8"/><path d="M13 8h7M13 10h7" stroke="#8a6010" stroke-width="0.8"/></svg>
  <svg style="left:13px;top:405px" width="21" height="24" viewBox="0 0 21 24"><path d="M15 8l-9 10a3 3 0 0 1-4-4l11-12a4 4 0 0 1 6 5l-11 12" fill="none" stroke="#9a9a9a" stroke-width="2"/><path d="M16 6l-8 9a1.5 1.5 0 0 1-2-2l7-8" fill="none" stroke="#aaa" stroke-width="1.6"/></svg>
  <!-- page text -->
  <div class="a ser" style="left:0;top:87px;width:886px;height:354px;overflow:hidden">
   <div class="a" style="left:0;top:-87px;width:886px;height:500px">
<div class="pl" style="left:131px;top:76.73px">enpai.</div>
<div class="pl pj" style="left:131px;top:92.00px;word-spacing:0.215px"><b>Enk:</b> (teru.) com inicial maiúscula, é a espécie dos enks</div>
<div class="pl" style="left:131px;top:107.27px">(ver). Ver “kena”.</div>
<div class="pl pj" style="left:131px;top:122.54px;letter-spacing:-0.084px"><b>enk:</b> (teru.) membro masculino da espécie dos enks (ver)</div>
<div class="pl pj" style="left:131px;top:137.81px;word-spacing:0.750px">ou enkóide (ver). Ver também Enk e kena. O nome enk</div>
<div class="pl pj" style="left:131px;top:153.08px;letter-spacing:-0.053px">origina-se de seu significado antigo: “mão”, ou “punho”.</div>
<div class="pl" style="left:131px;top:168.35px">Ver “enkilismo”.</div>
<div class="pl pj" style="left:131px;top:183.62px;word-spacing:5.990px"><b>Enk autoconscius:</b> (rônio e teru. científico) nome</div>
<div class="pl pj" style="left:131px;top:198.89px;word-spacing:0.076px">científico incompleto da espécie dos enks (ver). Ver <i>Enk</i></div>
<div class="pl" style="left:131px;top:214.16px"><i>autoconscius autoconscius,</i> “enk” e “kena”.</div>
<div class="pl pj" style="left:131px;top:229.43px;letter-spacing:-0.198px"><b>Enk autoconscius autoconscius:</b> (rônio e teru. científico)</div>
<div class="pl pj" style="left:131px;top:244.70px;word-spacing:1.377px">nome científico da espécie dos enks (ver). Ver “enk” e</div>
<div class="pl" style="left:131px;top:259.97px">“kena”.</div>
<div class="pl pj" style="left:131px;top:275.24px;word-spacing:1.062px"><b>enkbio:</b> (teru.) entre o enk (ver) e o bio (ver), ou vice-</div>
<div class="pl" style="left:131px;top:290.51px">versa.</div>
<div class="pl pj" style="left:131px;top:305.78px;word-spacing:1.198px"><b>enkcidas:</b> (teru.) sinônimo de enkicidas (ver enkicida).</div>
<div class="pl" style="left:131px;top:321.05px">Singular: “enkicida”.</div>
<div class="pl pj" style="left:131px;top:336.32px;word-spacing:1.378px"><b>enkcídio(s):</b> (teru.) sinônimo de enkicídio(s) (ver). Ver</div>
<div class="pl" style="left:131px;top:351.59px">“assassínios” no RDPR.</div>
<div class="pl" style="left:131px;top:366.86px"><b>Enk das Botas:</b> (teru.) fantasma de Selvespessa (ver).</div>
<div class="pl pj" style="left:131px;top:382.13px;word-spacing:12.495px"><b>enkiagearem; enkiagear:</b> (teru.) homenagearem;</div>
<div class="pl pj" style="left:131px;top:397.40px;word-spacing:5.569px">homenagear, um ou mais enks (ver). Sinônimo de</div>
<div class="pl" style="left:131px;top:412.67px">“enkigearem; enkigear” (ver). Ver “enkiagem”.</div>
<div class="pl pj" style="left:131px;top:427.94px;word-spacing:5.167px"><b>enkiagem:</b> (teru.) homenagem para enks (ver). Ver</div>
<div class="pl" style="left:477px;top:76.73px">enk (ver).</div>
<div class="pl pj" style="left:477px;top:92.00px;letter-spacing:-0.059px"><b>enkpai:</b> (teru.) papai, quando a palavra é usada pelos(as)</div>
<div class="pl" style="left:477px;top:107.27px">filhos(as) dos enks (ver). Ver “Enkpai Cláusio”.</div>
<div class="pl pj" style="left:477px;top:122.54px;word-spacing:2.562px"><b>Enkpai Cláusio:</b> (teru.) personagem mitológico nório</div>
<div class="pl pj" style="left:477px;top:137.81px;word-spacing:3.810px">(ver), o qual presenteia escondido os enkinhos (ver)</div>
<div class="pl pj" style="left:477px;top:153.08px;word-spacing:2.812px">obedientes à meia-lúmia (ver) de Espectral (ver). Ver</div>
<div class="pl" style="left:477px;top:168.35px">“enkpai”.</div>
<div class="pl pj" style="left:477px;top:183.62px;word-spacing:0.398px"><b>enks:</b> (teru.) espécie dominante do planeta Géa, na qual</div>
<div class="pl pj" style="left:477px;top:198.89px;word-spacing:4.581px">se incluem diversas personagens deste escrito (feito</div>
<div class="pl pj" style="left:477px;top:214.16px;word-spacing:0.458px">Clausar, Gia, Rá e muitas outras) os enks são chamados</div>
<div class="pl pj" style="left:477px;top:229.43px;word-spacing:0.713px">cientificamente de <i>Enk autoconscius autoconscius</i> (ver)</div>
<div class="pl pj" style="left:477px;top:244.70px;word-spacing:1.504px">(enk autoconsciente autoconsciente). Alguns desejaram</div>
<div class="pl pj" style="left:477px;top:259.97px;letter-spacing:-0.166px">mudar essa classificação para <i>Enk autoconscius Geocons-</i></div>
<div class="pl pj" style="left:477px;top:275.24px;word-spacing:0.197px"><i>cius</i> (enk dotado de autoconsciência e de consciência da</div>
<div class="pl pj" style="left:477px;top:290.51px;word-spacing:1.967px">existência de Géo), porém a maioria dos cientistas foi</div>
<div class="pl pj" style="left:477px;top:305.78px;word-spacing:0.242px">contra. Os enks são semelhantes, mas não idênticos, aos</div>
<div class="pl pj" style="left:477px;top:321.05px;word-spacing:0.309px">humanos; as diferenças não impedem a união sexual e a</div>
<div class="pl pj" style="left:477px;top:336.32px;word-spacing:1.830px">fertilidade da prole híbrida. Ver “Enk”, “enk”, “kena”,</div>
<div class="pl" style="left:477px;top:351.59px">“enkóide”, “autoconsciente”, <i>Neomo</i> e <i>Neoenk</i>.</div>
<div class="pl pj" style="left:477px;top:366.86px;letter-spacing:-0.034px"><b>enktomia:</b> (teru.) anatomia dos enks (ver). Ver “trompas</div>
<div class="pl" style="left:477px;top:382.13px">de Nósfast” e “enktomista”.</div>
<div class="pl pj" style="left:477px;top:397.40px;letter-spacing:-0.339px"><b>enktomista:</b> (teru.) anatomista de enks (ver). Ver “Nósfast”</div>
<div class="pl" style="left:477px;top:412.67px">e “enktomia”.</div>
<div class="pl pj" style="left:477px;top:427.94px;letter-spacing:-0.210px"><b>enktropófago:</b> (teru.) comedor de enks (ver); antropófago</div>
   </div>
  </div>
</div>

<!-- WIDGETS -->
<div class="wg" style="left:165px"><div class="wgh"></div><div class="wgb"></div><svg style="left:3px;top:4px" width="8" height="10"><path d="M3 0.5L0.8 5H4.5L2.5 9.5M4.5 5L7 2" fill="none" stroke="#3a9aa8" stroke-width="1.5"/></svg><div class="wgt" style="left:17px">Vcore</div><svg style="left:77.5px;top:3px" width="16" height="11" viewBox="0 0 16 11"><path d="M11 1.2H5a4.3 4.3 0 0 0 0 8.6H11" fill="none" stroke="#555" stroke-width="2.2"/><path d="M11 3.8H5.5a1.7 1.7 0 0 0 0 3.4H11" fill="none" stroke="#777" stroke-width="1.2"/><path d="M13.5 1v1.5M13.5 4.5v1.5M13.5 8v1.5" stroke="#555" stroke-width="1.2"/></svg><svg style="left:94px;top:2px" width="12" height="12" viewBox="0 0 12 12"><circle cx="6" cy="6" r="5.3" fill="#c8c8c8" stroke="#666" stroke-width="1.1"/><path d="M3.5 3.5L8.5 8.5M8.5 3.5L3.5 8.5" stroke="#3a5a3a" stroke-width="1.1"/></svg><div class="lcd"></div><svg style="left:5.5px;top:17px" width="98" height="25" viewBox="0 0 98 25"><path transform="translate(13,7.5)" d="M1 0H9.2L7.6 2.4H2.4Z M10.2 0.8V6.4L7.8 5.6V2.4Z M10.2 7.6V13.4L7.8 11.6V8.4Z M1 14.2H9.2L7.6 11.8H2.4Z M0 7.6V13.4L2.4 11.6V8.4Z M0 0.8V6.4L2.4 5.6V2.4Z M0.8 7.1L2.2 5.9H8L9.4 7.1L8 8.3H2.2Z" fill="#9ad8b4"/><path transform="translate(19.3,7.5)" d="M10.2 0.8V6.4L7.8 5.6V2.4Z M10.2 7.6V13.4L7.8 11.6V8.4Z" fill="#2c5c46"/><rect x="39.6" y="19.5" width="2" height="2" fill="#2c5c46"/><path transform="translate(46.900000000000006,7.5)" d="M1 0H9.2L7.6 2.4H2.4Z M10.2 0.8V6.4L7.8 5.6V2.4Z M0.8 7.1L2.2 5.9H8L9.4 7.1L8 8.3H2.2Z M10.2 7.6V13.4L7.8 11.6V8.4Z M1 14.2H9.2L7.6 11.8H2.4Z" fill="#2c5c46"/><path transform="translate(58.2,7.5)" d="M1 0H9.2L7.6 2.4H2.4Z M10.2 0.8V6.4L7.8 5.6V2.4Z M10.2 7.6V13.4L7.8 11.6V8.4Z M1 14.2H9.2L7.6 11.8H2.4Z M0 7.6V13.4L2.4 11.6V8.4Z M0 0.8V6.4L2.4 5.6V2.4Z" fill="#2c5c46"/><path d="M72.5 10L76.0 18L79.5 10" fill="none" stroke="#40705a" stroke-width="1.2"/></svg></div>
<div class="wg" style="left:280px"><div class="wgh"></div><div class="wgb"></div><svg style="left:3px;top:4px" width="8" height="10"><path d="M3 0.5L0.8 5H4.5L2.5 9.5M4.5 5L7 2" fill="none" stroke="#3a9aa8" stroke-width="1.5"/></svg><div class="wgt" style="left:17px">+3.3</div><svg style="left:77.5px;top:3px" width="16" height="11" viewBox="0 0 16 11"><path d="M11 1.2H5a4.3 4.3 0 0 0 0 8.6H11" fill="none" stroke="#555" stroke-width="2.2"/><path d="M11 3.8H5.5a1.7 1.7 0 0 0 0 3.4H11" fill="none" stroke="#777" stroke-width="1.2"/><path d="M13.5 1v1.5M13.5 4.5v1.5M13.5 8v1.5" stroke="#555" stroke-width="1.2"/></svg><svg style="left:94px;top:2px" width="12" height="12" viewBox="0 0 12 12"><circle cx="6" cy="6" r="5.3" fill="#c8c8c8" stroke="#666" stroke-width="1.1"/><path d="M3.5 3.5L8.5 8.5M8.5 3.5L3.5 8.5" stroke="#3a5a3a" stroke-width="1.1"/></svg><div class="lcd"></div><svg style="left:5.5px;top:17px" width="98" height="25" viewBox="0 0 98 25"><path transform="translate(13,7.5)" d="M1 0H9.2L7.6 2.4H2.4Z M10.2 0.8V6.4L7.8 5.6V2.4Z M10.2 7.6V13.4L7.8 11.6V8.4Z M1 14.2H9.2L7.6 11.8H2.4Z M0 7.6V13.4L2.4 11.6V8.4Z M0 0.8V6.4L2.4 5.6V2.4Z M0.8 7.1L2.2 5.9H8L9.4 7.1L8 8.3H2.2Z" fill="#9ad8b4"/><path transform="translate(24.3,7.5)" d="M1 0H9.2L7.6 2.4H2.4Z M10.2 0.8V6.4L7.8 5.6V2.4Z M0.8 7.1L2.2 5.9H8L9.4 7.1L8 8.3H2.2Z M10.2 7.6V13.4L7.8 11.6V8.4Z M1 14.2H9.2L7.6 11.8H2.4Z" fill="#2c5c46"/><rect x="39.6" y="19.5" width="2" height="2" fill="#2c5c46"/><path transform="translate(41.900000000000006,7.5)" d="M10.2 0.8V6.4L7.8 5.6V2.4Z M10.2 7.6V13.4L7.8 11.6V8.4Z" fill="#2c5c46"/><path transform="translate(58.2,7.5)" d="M1 0H9.2L7.6 2.4H2.4Z M10.2 0.8V6.4L7.8 5.6V2.4Z M10.2 7.6V13.4L7.8 11.6V8.4Z M1 14.2H9.2L7.6 11.8H2.4Z M0 0.8V6.4L2.4 5.6V2.4Z M0.8 7.1L2.2 5.9H8L9.4 7.1L8 8.3H2.2Z" fill="#2c5c46"/><path d="M72.5 10L76.0 18L79.5 10" fill="none" stroke="#40705a" stroke-width="1.2"/></svg></div>
<div class="wg" style="left:396px"><div class="wgh"></div><div class="wgb"></div><svg style="left:3px;top:4px" width="8" height="10"><path d="M3 0.5L0.8 5H4.5L2.5 9.5M4.5 5L7 2" fill="none" stroke="#3a9aa8" stroke-width="1.5"/></svg><div class="wgt" style="left:17px">+5.0</div><svg style="left:77.5px;top:3px" width="16" height="11" viewBox="0 0 16 11"><path d="M11 1.2H5a4.3 4.3 0 0 0 0 8.6H11" fill="none" stroke="#555" stroke-width="2.2"/><path d="M11 3.8H5.5a1.7 1.7 0 0 0 0 3.4H11" fill="none" stroke="#777" stroke-width="1.2"/><path d="M13.5 1v1.5M13.5 4.5v1.5M13.5 8v1.5" stroke="#555" stroke-width="1.2"/></svg><svg style="left:94px;top:2px" width="12" height="12" viewBox="0 0 12 12"><circle cx="6" cy="6" r="5.3" fill="#c8c8c8" stroke="#666" stroke-width="1.1"/><path d="M3.5 3.5L8.5 8.5M8.5 3.5L3.5 8.5" stroke="#3a5a3a" stroke-width="1.1"/></svg><div class="lcd"></div><svg style="left:5.5px;top:17px" width="98" height="25" viewBox="0 0 98 25"><path transform="translate(13,7.5)" d="M1 0H9.2L7.6 2.4H2.4Z M10.2 0.8V6.4L7.8 5.6V2.4Z M10.2 7.6V13.4L7.8 11.6V8.4Z M1 14.2H9.2L7.6 11.8H2.4Z M0 7.6V13.4L2.4 11.6V8.4Z M0 0.8V6.4L2.4 5.6V2.4Z M0.8 7.1L2.2 5.9H8L9.4 7.1L8 8.3H2.2Z" fill="#9ad8b4"/><path transform="translate(24.3,7.5)" d="M0 0.8V6.4L2.4 5.6V2.4Z M0.8 7.1L2.2 5.9H8L9.4 7.1L8 8.3H2.2Z M10.2 0.8V6.4L7.8 5.6V2.4Z M10.2 7.6V13.4L7.8 11.6V8.4Z" fill="#2c5c46"/><rect x="39.6" y="19.5" width="2" height="2" fill="#2c5c46"/><path transform="translate(46.900000000000006,7.5)" d="M1 0H9.2L7.6 2.4H2.4Z M10.2 0.8V6.4L7.8 5.6V2.4Z M10.2 7.6V13.4L7.8 11.6V8.4Z M1 14.2H9.2L7.6 11.8H2.4Z M0 7.6V13.4L2.4 11.6V8.4Z M0 0.8V6.4L2.4 5.6V2.4Z M0.8 7.1L2.2 5.9H8L9.4 7.1L8 8.3H2.2Z" fill="#2c5c46"/><path transform="translate(53.2,7.5)" d="M10.2 0.8V6.4L7.8 5.6V2.4Z M10.2 7.6V13.4L7.8 11.6V8.4Z" fill="#2c5c46"/><path d="M72.5 10L76.0 18L79.5 10" fill="none" stroke="#40705a" stroke-width="1.2"/></svg></div>
<div class="wg" style="left:511px"><div class="wgh"></div><div class="wgb"></div><svg style="left:3px;top:4px" width="8" height="10"><path d="M3 0.5L0.8 5H4.5L2.5 9.5M4.5 5L7 2" fill="none" stroke="#3a9aa8" stroke-width="1.5"/></svg><div class="wgt" style="left:17px">+12.0</div><svg style="left:77.5px;top:3px" width="16" height="11" viewBox="0 0 16 11"><path d="M11 1.2H5a4.3 4.3 0 0 0 0 8.6H11" fill="none" stroke="#555" stroke-width="2.2"/><path d="M11 3.8H5.5a1.7 1.7 0 0 0 0 3.4H11" fill="none" stroke="#777" stroke-width="1.2"/><path d="M13.5 1v1.5M13.5 4.5v1.5M13.5 8v1.5" stroke="#555" stroke-width="1.2"/></svg><svg style="left:94px;top:2px" width="12" height="12" viewBox="0 0 12 12"><circle cx="6" cy="6" r="5.3" fill="#c8c8c8" stroke="#666" stroke-width="1.1"/><path d="M3.5 3.5L8.5 8.5M8.5 3.5L3.5 8.5" stroke="#3a5a3a" stroke-width="1.1"/></svg><div class="lcd"></div><svg style="left:5.5px;top:17px" width="98" height="25" viewBox="0 0 98 25"><path transform="translate(8,7.5)" d="M10.2 0.8V6.4L7.8 5.6V2.4Z M10.2 7.6V13.4L7.8 11.6V8.4Z" fill="#2c5c46"/><path transform="translate(19.3,7.5)" d="M10.2 0.8V6.4L7.8 5.6V2.4Z M10.2 7.6V13.4L7.8 11.6V8.4Z" fill="#2c5c46"/><rect x="39.6" y="19.5" width="2" height="2" fill="#2c5c46"/><path transform="translate(46.900000000000006,7.5)" d="M1 0H9.2L7.6 2.4H2.4Z M10.2 0.8V6.4L7.8 5.6V2.4Z M10.2 7.6V13.4L7.8 11.6V8.4Z M1 14.2H9.2L7.6 11.8H2.4Z M0 0.8V6.4L2.4 5.6V2.4Z M0.8 7.1L2.2 5.9H8L9.4 7.1L8 8.3H2.2Z" fill="#2c5c46"/><path transform="translate(58.2,7.5)" d="M1 0H9.2L7.6 2.4H2.4Z M10.2 0.8V6.4L7.8 5.6V2.4Z M10.2 7.6V13.4L7.8 11.6V8.4Z M1 14.2H9.2L7.6 11.8H2.4Z M0 7.6V13.4L2.4 11.6V8.4Z M0 0.8V6.4L2.4 5.6V2.4Z" fill="#2c5c46"/><path d="M72.5 10L76.0 18L79.5 10" fill="none" stroke="#40705a" stroke-width="1.2"/></svg></div>
<div class="wg" style="left:626px"><div class="wgh"></div><div class="wgb"></div><svg style="left:2.5px;top:3px" width="8" height="12"><path d="M4 0.5V7" stroke="#3a8a98" stroke-width="1.6"/><circle cx="4" cy="9" r="2.4" fill="none" stroke="#3a8a98" stroke-width="1.4"/></svg><div class="wgt" style="left:16px">CPU</div><svg style="left:77.5px;top:3px" width="16" height="11" viewBox="0 0 16 11"><path d="M11 1.2H5a4.3 4.3 0 0 0 0 8.6H11" fill="none" stroke="#555" stroke-width="2.2"/><path d="M11 3.8H5.5a1.7 1.7 0 0 0 0 3.4H11" fill="none" stroke="#777" stroke-width="1.2"/><path d="M13.5 1v1.5M13.5 4.5v1.5M13.5 8v1.5" stroke="#555" stroke-width="1.2"/></svg><svg style="left:94px;top:2px" width="12" height="12" viewBox="0 0 12 12"><circle cx="6" cy="6" r="5.3" fill="#c8c8c8" stroke="#666" stroke-width="1.1"/><path d="M3.5 3.5L8.5 8.5M8.5 3.5L3.5 8.5" stroke="#3a5a3a" stroke-width="1.1"/></svg><div class="lcd"></div><svg style="left:5.5px;top:17px" width="98" height="25" viewBox="0 0 98 25"><path transform="translate(13,7.5)" d="M1 0H9.2L7.6 2.4H2.4Z M10.2 0.8V6.4L7.8 5.6V2.4Z M10.2 7.6V13.4L7.8 11.6V8.4Z M1 14.2H9.2L7.6 11.8H2.4Z M0 7.6V13.4L2.4 11.6V8.4Z M0 0.8V6.4L2.4 5.6V2.4Z M0.8 7.1L2.2 5.9H8L9.4 7.1L8 8.3H2.2Z" fill="#9ad8b4"/><path transform="translate(24.3,7.5)" d="M1 0H9.2L7.6 2.4H2.4Z M10.2 0.8V6.4L7.8 5.6V2.4Z M10.2 7.6V13.4L7.8 11.6V8.4Z M1 14.2H9.2L7.6 11.8H2.4Z M0 7.6V13.4L2.4 11.6V8.4Z M0 0.8V6.4L2.4 5.6V2.4Z M0.8 7.1L2.2 5.9H8L9.4 7.1L8 8.3H2.2Z" fill="#9ad8b4"/><path transform="translate(35.6,7.5)" d="M1 0H9.2L7.6 2.4H2.4Z M10.2 0.8V6.4L7.8 5.6V2.4Z M10.2 7.6V13.4L7.8 11.6V8.4Z M1 14.2H9.2L7.6 11.8H2.4Z M0 7.6V13.4L2.4 11.6V8.4Z M0 0.8V6.4L2.4 5.6V2.4Z M0.8 7.1L2.2 5.9H8L9.4 7.1L8 8.3H2.2Z" fill="#9ad8b4"/><path transform="translate(46.900000000000006,7.5)" d="M1 0H9.2L7.6 2.4H2.4Z M0 0.8V6.4L2.4 5.6V2.4Z M0.8 7.1L2.2 5.9H8L9.4 7.1L8 8.3H2.2Z M10.2 7.6V13.4L7.8 11.6V8.4Z M1 14.2H9.2L7.6 11.8H2.4Z" fill="#2c5c46"/><path transform="translate(58.2,7.5)" d="M1 0H9.2L7.6 2.4H2.4Z M10.2 0.8V6.4L7.8 5.6V2.4Z M10.2 7.6V13.4L7.8 11.6V8.4Z" fill="#2c5c46"/><circle cx="73.5" cy="10.5" r="2.2" fill="none" stroke="#356a50" stroke-width="1.3"/><path d="M84.5 10.5H78.5V21.5H84.5" fill="none" stroke="#356a50" stroke-width="1.5"/></svg></div>
<div class="wg" style="left:741px"><div class="wgh"></div><div class="wgb"></div><svg style="left:2.5px;top:3px" width="8" height="12"><path d="M4 0.5V7" stroke="#3a8a98" stroke-width="1.6"/><circle cx="4" cy="9" r="2.4" fill="none" stroke="#3a8a98" stroke-width="1.4"/></svg><div class="wgt" style="left:16px">MB</div><svg style="left:77.5px;top:3px" width="16" height="11" viewBox="0 0 16 11"><path d="M11 1.2H5a4.3 4.3 0 0 0 0 8.6H11" fill="none" stroke="#555" stroke-width="2.2"/><path d="M11 3.8H5.5a1.7 1.7 0 0 0 0 3.4H11" fill="none" stroke="#777" stroke-width="1.2"/><path d="M13.5 1v1.5M13.5 4.5v1.5M13.5 8v1.5" stroke="#555" stroke-width="1.2"/></svg><svg style="left:94px;top:2px" width="12" height="12" viewBox="0 0 12 12"><circle cx="6" cy="6" r="5.3" fill="#c8c8c8" stroke="#666" stroke-width="1.1"/><path d="M3.5 3.5L8.5 8.5M8.5 3.5L3.5 8.5" stroke="#3a5a3a" stroke-width="1.1"/></svg><div class="lcd"></div><svg style="left:5.5px;top:17px" width="98" height="25" viewBox="0 0 98 25"><path transform="translate(13,7.5)" d="M1 0H9.2L7.6 2.4H2.4Z M10.2 0.8V6.4L7.8 5.6V2.4Z M10.2 7.6V13.4L7.8 11.6V8.4Z M1 14.2H9.2L7.6 11.8H2.4Z M0 7.6V13.4L2.4 11.6V8.4Z M0 0.8V6.4L2.4 5.6V2.4Z M0.8 7.1L2.2 5.9H8L9.4 7.1L8 8.3H2.2Z" fill="#9ad8b4"/><path transform="translate(24.3,7.5)" d="M1 0H9.2L7.6 2.4H2.4Z M10.2 0.8V6.4L7.8 5.6V2.4Z M10.2 7.6V13.4L7.8 11.6V8.4Z M1 14.2H9.2L7.6 11.8H2.4Z M0 7.6V13.4L2.4 11.6V8.4Z M0 0.8V6.4L2.4 5.6V2.4Z M0.8 7.1L2.2 5.9H8L9.4 7.1L8 8.3H2.2Z" fill="#9ad8b4"/><path transform="translate(35.6,7.5)" d="M1 0H9.2L7.6 2.4H2.4Z M10.2 0.8V6.4L7.8 5.6V2.4Z M10.2 7.6V13.4L7.8 11.6V8.4Z M1 14.2H9.2L7.6 11.8H2.4Z M0 7.6V13.4L2.4 11.6V8.4Z M0 0.8V6.4L2.4 5.6V2.4Z M0.8 7.1L2.2 5.9H8L9.4 7.1L8 8.3H2.2Z" fill="#9ad8b4"/><path transform="translate(46.900000000000006,7.5)" d="M1 0H9.2L7.6 2.4H2.4Z M10.2 0.8V6.4L7.8 5.6V2.4Z M0.8 7.1L2.2 5.9H8L9.4 7.1L8 8.3H2.2Z M10.2 7.6V13.4L7.8 11.6V8.4Z M1 14.2H9.2L7.6 11.8H2.4Z" fill="#2c5c46"/><path transform="translate(58.2,7.5)" d="M1 0H9.2L7.6 2.4H2.4Z M0 0.8V6.4L2.4 5.6V2.4Z M0.8 7.1L2.2 5.9H8L9.4 7.1L8 8.3H2.2Z M0 7.6V13.4L2.4 11.6V8.4Z M1 14.2H9.2L7.6 11.8H2.4Z M10.2 7.6V13.4L7.8 11.6V8.4Z" fill="#2c5c46"/><circle cx="73.5" cy="10.5" r="2.2" fill="none" stroke="#356a50" stroke-width="1.3"/><path d="M84.5 10.5H78.5V21.5H84.5" fill="none" stroke="#356a50" stroke-width="1.5"/></svg></div>
<div class="wg" style="left:857px"><div class="wgh"></div><div class="wgb"></div><svg style="left:3px;top:2px" width="13" height="13" viewBox="0 0 12 12"><path d="M6 6C5.5 3.5 4 1.5 6.5 0.5 9 0 8 3.5 6 6ZM6 6C8.5 6 11 5 11.5 7.5 11.5 10 8 8 6 6ZM6 6C4.5 8 3 11 1 9.5-0.5 7.5 3.5 6.5 6 6Z" fill="#3a9aa8"/></svg><div class="wgt" style="left:16px">CPU</div><svg style="left:77.5px;top:3px" width="16" height="11" viewBox="0 0 16 11"><path d="M11 1.2H5a4.3 4.3 0 0 0 0 8.6H11" fill="none" stroke="#555" stroke-width="2.2"/><path d="M11 3.8H5.5a1.7 1.7 0 0 0 0 3.4H11" fill="none" stroke="#777" stroke-width="1.2"/><path d="M13.5 1v1.5M13.5 4.5v1.5M13.5 8v1.5" stroke="#555" stroke-width="1.2"/></svg><svg style="left:94px;top:2px" width="12" height="12" viewBox="0 0 12 12"><circle cx="6" cy="6" r="5.3" fill="#c8c8c8" stroke="#666" stroke-width="1.1"/><path d="M3.5 3.5L8.5 8.5M8.5 3.5L3.5 8.5" stroke="#3a5a3a" stroke-width="1.1"/></svg><div class="lcd"></div><svg style="left:5.5px;top:17px" width="98" height="25" viewBox="0 0 98 25"><path transform="translate(13,7.5)" d="M1 0H9.2L7.6 2.4H2.4Z M10.2 0.8V6.4L7.8 5.6V2.4Z M10.2 7.6V13.4L7.8 11.6V8.4Z M1 14.2H9.2L7.6 11.8H2.4Z M0 7.6V13.4L2.4 11.6V8.4Z M0 0.8V6.4L2.4 5.6V2.4Z M0.8 7.1L2.2 5.9H8L9.4 7.1L8 8.3H2.2Z" fill="#9ad8b4"/><path transform="translate(24.3,7.5)" d="M1 0H9.2L7.6 2.4H2.4Z M10.2 0.8V6.4L7.8 5.6V2.4Z M0.8 7.1L2.2 5.9H8L9.4 7.1L8 8.3H2.2Z M0 7.6V13.4L2.4 11.6V8.4Z M1 14.2H9.2L7.6 11.8H2.4Z" fill="#2c5c46"/><path transform="translate(30.6,7.5)" d="M10.2 0.8V6.4L7.8 5.6V2.4Z M10.2 7.6V13.4L7.8 11.6V8.4Z" fill="#2c5c46"/><path transform="translate(46.900000000000006,7.5)" d="M1 0H9.2L7.6 2.4H2.4Z M10.2 0.8V6.4L7.8 5.6V2.4Z M10.2 7.6V13.4L7.8 11.6V8.4Z M1 14.2H9.2L7.6 11.8H2.4Z M0 0.8V6.4L2.4 5.6V2.4Z M0.8 7.1L2.2 5.9H8L9.4 7.1L8 8.3H2.2Z" fill="#2c5c46"/><path transform="translate(53.2,7.5)" d="M10.2 0.8V6.4L7.8 5.6V2.4Z M10.2 7.6V13.4L7.8 11.6V8.4Z" fill="#2c5c46"/><text x="70.5" y="17.5" font-family="Liberation Sans" font-size="9" fill="#40705a" letter-spacing="0.2" transform="scale(1 0.9)" transform-origin="69.5 17">RPM</text></svg></div>
<div class="wg" style="left:972px"><div class="wgh"></div><div class="wgb"></div><svg style="left:3px;top:2px" width="13" height="13" viewBox="0 0 12 12"><path d="M6 6C5.5 3.5 4 1.5 6.5 0.5 9 0 8 3.5 6 6ZM6 6C8.5 6 11 5 11.5 7.5 11.5 10 8 8 6 6ZM6 6C4.5 8 3 11 1 9.5-0.5 7.5 3.5 6.5 6 6Z" fill="#3a9aa8"/></svg><div class="wgt" style="left:16px">CHASSIS</div><svg style="left:77.5px;top:3px" width="16" height="11" viewBox="0 0 16 11"><path d="M11 1.2H5a4.3 4.3 0 0 0 0 8.6H11" fill="none" stroke="#555" stroke-width="2.2"/><path d="M11 3.8H5.5a1.7 1.7 0 0 0 0 3.4H11" fill="none" stroke="#777" stroke-width="1.2"/><path d="M13.5 1v1.5M13.5 4.5v1.5M13.5 8v1.5" stroke="#555" stroke-width="1.2"/></svg><svg style="left:94px;top:2px" width="12" height="12" viewBox="0 0 12 12"><circle cx="6" cy="6" r="5.3" fill="#c8c8c8" stroke="#666" stroke-width="1.1"/><path d="M3.5 3.5L8.5 8.5M8.5 3.5L3.5 8.5" stroke="#3a5a3a" stroke-width="1.1"/></svg><div class="lcd"></div><svg style="left:5.5px;top:17px" width="98" height="25" viewBox="0 0 98 25"><path transform="translate(13,7.5)" d="M1 0H9.2L7.6 2.4H2.4Z M10.2 0.8V6.4L7.8 5.6V2.4Z M10.2 7.6V13.4L7.8 11.6V8.4Z M1 14.2H9.2L7.6 11.8H2.4Z M0 7.6V13.4L2.4 11.6V8.4Z M0 0.8V6.4L2.4 5.6V2.4Z M0.8 7.1L2.2 5.9H8L9.4 7.1L8 8.3H2.2Z" fill="#9ad8b4"/><path transform="translate(24.3,7.5)" d="M1 0H9.2L7.6 2.4H2.4Z M10.2 0.8V6.4L7.8 5.6V2.4Z M0.8 7.1L2.2 5.9H8L9.4 7.1L8 8.3H2.2Z M0 7.6V13.4L2.4 11.6V8.4Z M1 14.2H9.2L7.6 11.8H2.4Z" fill="#2c5c46"/><path transform="translate(35.6,7.5)" d="M1 0H9.2L7.6 2.4H2.4Z M10.2 0.8V6.4L7.8 5.6V2.4Z M10.2 7.6V13.4L7.8 11.6V8.4Z" fill="#2c5c46"/><path transform="translate(46.900000000000006,7.5)" d="M1 0H9.2L7.6 2.4H2.4Z M0 0.8V6.4L2.4 5.6V2.4Z M0.8 7.1L2.2 5.9H8L9.4 7.1L8 8.3H2.2Z M0 7.6V13.4L2.4 11.6V8.4Z M1 14.2H9.2L7.6 11.8H2.4Z M10.2 7.6V13.4L7.8 11.6V8.4Z" fill="#2c5c46"/><path transform="translate(58.2,7.5)" d="M1 0H9.2L7.6 2.4H2.4Z M0 0.8V6.4L2.4 5.6V2.4Z M0.8 7.1L2.2 5.9H8L9.4 7.1L8 8.3H2.2Z M0 7.6V13.4L2.4 11.6V8.4Z M1 14.2H9.2L7.6 11.8H2.4Z M10.2 7.6V13.4L7.8 11.6V8.4Z" fill="#2c5c46"/><text x="70.5" y="17.5" font-family="Liberation Sans" font-size="9" fill="#40705a" letter-spacing="0.2" transform="scale(1 0.9)" transform-origin="69.5 17">RPM</text></svg></div>
<!-- /WIDGETS -->
</body></html>
